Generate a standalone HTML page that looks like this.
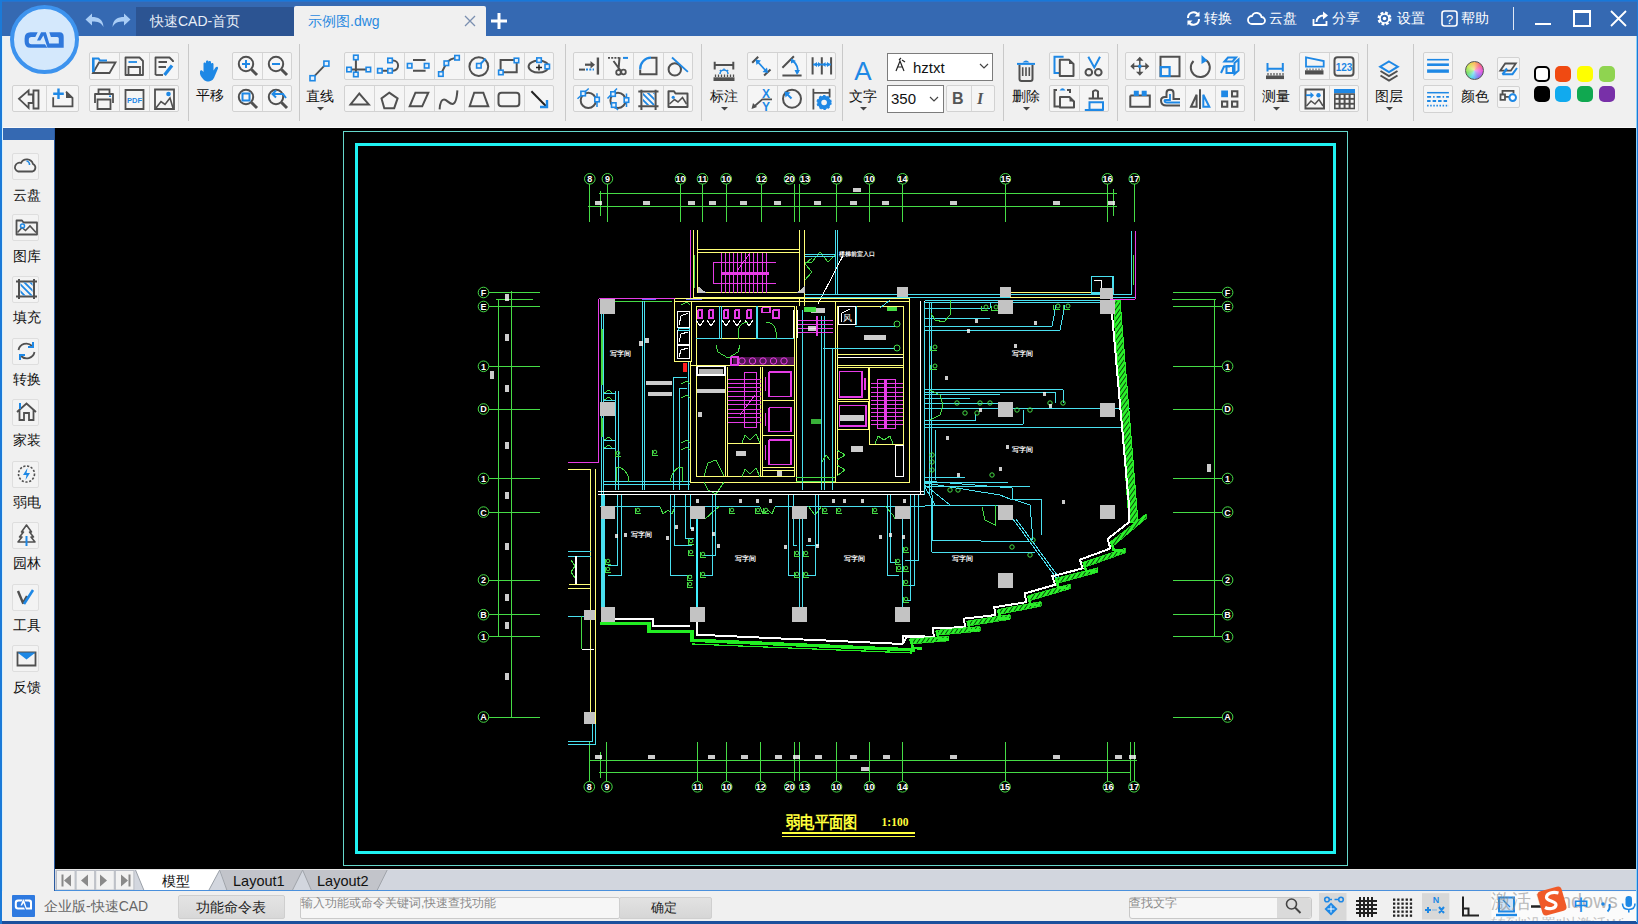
<!DOCTYPE html><html><head><meta charset="utf-8"><title>CAD</title><style>
html,body{margin:0;padding:0;width:1638px;height:924px;overflow:hidden;background:#f0f0f0;font-family:"Liberation Sans",sans-serif;}
.a{position:absolute;}
svg.a{overflow:visible}
.grp{position:absolute;border:1px solid #d2d2d2;background:#f5f5f5;box-sizing:border-box;border-radius:2px}
.sep{position:absolute;top:44px;width:1px;height:77px;background:#c9c9c9}
.lbl{position:absolute;font-size:14px;line-height:14px;color:#111;white-space:nowrap}
</style></head><body>
<div class="a" style="left:0px;top:0px;width:1638px;height:36px;background:#3569b2;"></div>
<div class="a" style="left:0px;top:0px;width:1638px;height:1px;background:#1878d8;"></div>
<div class="a" style="left:0px;top:1px;width:1638px;height:1px;background:#2872cc;"></div>
<div class="a" style="left:136px;top:7px;width:158px;height:29px;background:#2c5492;"></div>
<div class="a" style="left:150px;top:14px;font-size:14px;color:#e8eef8;line-height:1;white-space:nowrap;">快速CAD-首页</div>
<div class="a" style="left:294px;top:6px;width:192px;height:30px;background:#f0f0f0;border-radius:2px 2px 0 0;"></div>
<div class="a" style="left:308px;top:14px;font-size:14px;color:#2a8ae0;line-height:1;white-space:nowrap;">示例图.dwg</div>
<svg class="a" style="left:464px;top:15px;" width="12" height="12" viewBox="0 0 12 12"><path d="M1 1L11 11M11 1L1 11" stroke="#7a8fb0" stroke-width="1.3"/></svg>
<svg class="a" style="left:490px;top:12px;" width="18" height="18" viewBox="0 0 18 18"><path d="M9 1V17M1 9H17" stroke="#fff" stroke-width="3"/></svg>
<svg class="a" style="left:85px;top:13px;" width="19" height="15" viewBox="0 0 19 15"><path d="M0.5 6.5L7 0.5V4C13 4 18 6 18.5 14C16 9.5 13 8.5 7 8.5V12.5Z" fill="#a9cdf5"/></svg>
<svg class="a" style="left:112px;top:13px;" width="19" height="15" viewBox="0 0 19 15"><path d="M18.5 6.5L12 0.5V4C6 4 1 6 0.5 14C3 9.5 6 8.5 12 8.5V12.5Z" fill="#a9cdf5"/></svg>
<svg class="a" style="left:1185px;top:10px;" width="17" height="17" viewBox="0 0 17 17"><path d="M3 8A5.5 5.5 0 0 1 13.5 5.5M14 9A5.5 5.5 0 0 1 3.5 11.5" stroke="#fff" stroke-width="2" fill="none"/><path d="M14.5 1.5V6.5H9.5Z M2.5 15.5V10.5H7.5Z" fill="#fff"/></svg>
<div class="a" style="left:1204px;top:11px;font-size:14px;color:#fff;line-height:1;white-space:nowrap;">转换</div>
<svg class="a" style="left:1248px;top:10px;" width="17" height="17" viewBox="0 0 17 17"><path d="M4 14H13.5A3.5 3.5 0 0 0 13.5 7A5 5 0 0 0 4 6A4 4 0 0 0 4 14Z" stroke="#fff" stroke-width="1.8" fill="none"/></svg>
<div class="a" style="left:1269px;top:11px;font-size:14px;color:#fff;line-height:1;white-space:nowrap;">云盘</div>
<svg class="a" style="left:1312px;top:10px;" width="17" height="17" viewBox="0 0 17 17"><path d="M1.5 9V15H14.5V11" stroke="#fff" stroke-width="1.8" fill="none"/><path d="M4.5 12C5 7 8 5.5 12 5.5" stroke="#fff" stroke-width="1.8" fill="none"/><path d="M11 1.5L16 5.5L11 9.5Z" fill="#fff"/></svg>
<div class="a" style="left:1332px;top:11px;font-size:14px;color:#fff;line-height:1;white-space:nowrap;">分享</div>
<svg class="a" style="left:1376px;top:10px;" width="17" height="17" viewBox="0 0 17 17"><circle cx="8.5" cy="8.5" r="5.5" stroke="#fff" stroke-width="3" fill="none" stroke-dasharray="2.6 1.7"/><circle cx="8.5" cy="8.5" r="4.5" stroke="#fff" stroke-width="1.6" fill="none"/><circle cx="8.5" cy="8.5" r="1.8" fill="#fff"/></svg>
<div class="a" style="left:1397px;top:11px;font-size:14px;color:#fff;line-height:1;white-space:nowrap;">设置</div>
<svg class="a" style="left:1441px;top:10px;" width="17" height="17" viewBox="0 0 17 17"><rect x="1" y="1" width="15" height="15" rx="2.5" stroke="#fff" stroke-width="1.6" fill="none"/><text x="8.5" y="13.5" font-size="13" fill="#fff" text-anchor="middle" font-family="Liberation Sans">?</text></svg>
<div class="a" style="left:1461px;top:11px;font-size:14px;color:#fff;line-height:1;white-space:nowrap;">帮助</div>
<div class="a" style="left:1513px;top:7px;width:1px;height:23px;background:#e0e8f4;"></div>
<div class="a" style="left:1535px;top:23px;width:16px;height:2px;background:#fff;"></div>
<div class="a" style="left:1573px;top:10px;width:14px;height:12px;border:2px solid #fff;border-top-width:3px"></div>
<svg class="a" style="left:1610px;top:10px;" width="17" height="17" viewBox="0 0 17 17"><path d="M1 1L16 16M16 1L1 16" stroke="#fff" stroke-width="1.8"/></svg>
<div class="a" style="left:2px;top:36px;width:1634px;height:92px;background:#f0f0f0;"></div>
<div class="a" style="left:2px;top:127px;width:1634px;height:1px;background:#fafafa;"></div>
<div class="sep" style="left:188px"></div>
<div class="sep" style="left:299px"></div>
<div class="sep" style="left:565px"></div>
<div class="sep" style="left:701px"></div>
<div class="sep" style="left:842px"></div>
<div class="sep" style="left:1003px"></div>
<div class="sep" style="left:1117px"></div>
<div class="sep" style="left:1254px"></div>
<div class="sep" style="left:1367px"></div>
<div class="sep" style="left:1413px"></div>
<div class="grp" style="left:12px;top:85px;width:67px;height:27px"></div>
<div class="a" style="left:45.5px;top:86px;width:1px;height:25px;background:#d6d6d6"></div>
<div class="grp" style="left:89px;top:52px;width:90px;height:28px"></div>
<div class="a" style="left:119.0px;top:53px;width:1px;height:26px;background:#d6d6d6"></div>
<div class="a" style="left:149.0px;top:53px;width:1px;height:26px;background:#d6d6d6"></div>
<div class="grp" style="left:89px;top:85px;width:90px;height:27px"></div>
<div class="a" style="left:119.0px;top:86px;width:1px;height:25px;background:#d6d6d6"></div>
<div class="a" style="left:149.0px;top:86px;width:1px;height:25px;background:#d6d6d6"></div>
<div class="grp" style="left:232px;top:52px;width:60px;height:28px"></div>
<div class="a" style="left:262.0px;top:53px;width:1px;height:26px;background:#d6d6d6"></div>
<div class="grp" style="left:232px;top:85px;width:60px;height:27px"></div>
<div class="a" style="left:262.0px;top:86px;width:1px;height:25px;background:#d6d6d6"></div>
<div class="grp" style="left:344px;top:52px;width:210px;height:28px"></div>
<div class="a" style="left:374.0px;top:53px;width:1px;height:26px;background:#d6d6d6"></div>
<div class="a" style="left:404.0px;top:53px;width:1px;height:26px;background:#d6d6d6"></div>
<div class="a" style="left:434.0px;top:53px;width:1px;height:26px;background:#d6d6d6"></div>
<div class="a" style="left:464.0px;top:53px;width:1px;height:26px;background:#d6d6d6"></div>
<div class="a" style="left:494.0px;top:53px;width:1px;height:26px;background:#d6d6d6"></div>
<div class="a" style="left:524.0px;top:53px;width:1px;height:26px;background:#d6d6d6"></div>
<div class="grp" style="left:344px;top:85px;width:210px;height:27px"></div>
<div class="a" style="left:374.0px;top:86px;width:1px;height:25px;background:#d6d6d6"></div>
<div class="a" style="left:404.0px;top:86px;width:1px;height:25px;background:#d6d6d6"></div>
<div class="a" style="left:434.0px;top:86px;width:1px;height:25px;background:#d6d6d6"></div>
<div class="a" style="left:464.0px;top:86px;width:1px;height:25px;background:#d6d6d6"></div>
<div class="a" style="left:494.0px;top:86px;width:1px;height:25px;background:#d6d6d6"></div>
<div class="a" style="left:524.0px;top:86px;width:1px;height:25px;background:#d6d6d6"></div>
<div class="grp" style="left:573px;top:52px;width:120px;height:28px"></div>
<div class="a" style="left:603.0px;top:53px;width:1px;height:26px;background:#d6d6d6"></div>
<div class="a" style="left:633.0px;top:53px;width:1px;height:26px;background:#d6d6d6"></div>
<div class="a" style="left:663.0px;top:53px;width:1px;height:26px;background:#d6d6d6"></div>
<div class="grp" style="left:573px;top:85px;width:120px;height:27px"></div>
<div class="a" style="left:603.0px;top:86px;width:1px;height:25px;background:#d6d6d6"></div>
<div class="a" style="left:633.0px;top:86px;width:1px;height:25px;background:#d6d6d6"></div>
<div class="a" style="left:663.0px;top:86px;width:1px;height:25px;background:#d6d6d6"></div>
<div class="grp" style="left:747px;top:52px;width:89px;height:28px"></div>
<div class="a" style="left:776.7px;top:53px;width:1px;height:26px;background:#d6d6d6"></div>
<div class="a" style="left:806.3px;top:53px;width:1px;height:26px;background:#d6d6d6"></div>
<div class="grp" style="left:747px;top:85px;width:89px;height:27px"></div>
<div class="a" style="left:776.7px;top:86px;width:1px;height:25px;background:#d6d6d6"></div>
<div class="a" style="left:806.3px;top:86px;width:1px;height:25px;background:#d6d6d6"></div>
<div class="grp" style="left:946px;top:85px;width:49px;height:27px"></div>
<div class="a" style="left:970.5px;top:86px;width:1px;height:25px;background:#d6d6d6"></div>
<div class="grp" style="left:1049px;top:52px;width:60px;height:28px"></div>
<div class="a" style="left:1079.0px;top:53px;width:1px;height:26px;background:#d6d6d6"></div>
<div class="grp" style="left:1049px;top:85px;width:60px;height:27px"></div>
<div class="a" style="left:1079.0px;top:86px;width:1px;height:25px;background:#d6d6d6"></div>
<div class="grp" style="left:1125px;top:52px;width:120px;height:28px"></div>
<div class="a" style="left:1155.0px;top:53px;width:1px;height:26px;background:#d6d6d6"></div>
<div class="a" style="left:1185.0px;top:53px;width:1px;height:26px;background:#d6d6d6"></div>
<div class="a" style="left:1215.0px;top:53px;width:1px;height:26px;background:#d6d6d6"></div>
<div class="grp" style="left:1125px;top:85px;width:120px;height:27px"></div>
<div class="a" style="left:1155.0px;top:86px;width:1px;height:25px;background:#d6d6d6"></div>
<div class="a" style="left:1185.0px;top:86px;width:1px;height:25px;background:#d6d6d6"></div>
<div class="a" style="left:1215.0px;top:86px;width:1px;height:25px;background:#d6d6d6"></div>
<div class="grp" style="left:1299px;top:52px;width:60px;height:28px"></div>
<div class="a" style="left:1329.0px;top:53px;width:1px;height:26px;background:#d6d6d6"></div>
<div class="grp" style="left:1299px;top:85px;width:60px;height:27px"></div>
<div class="a" style="left:1329.0px;top:86px;width:1px;height:25px;background:#d6d6d6"></div>
<div class="grp" style="left:1423px;top:52px;width:30px;height:28px"></div>
<div class="grp" style="left:1423px;top:85px;width:30px;height:28px"></div>
<div class="grp" style="left:1497px;top:57px;width:23px;height:23px"></div>
<div class="grp" style="left:1497px;top:86px;width:23px;height:22px"></div>
<div class="a" style="left:887px;top:53px;width:106px;height:28px;border:1px solid #7c7c7c;background:#fff;box-sizing:border-box"></div>
<div class="a" style="left:913px;top:60px;font-size:15px;color:#111;line-height:1;white-space:nowrap;">hztxt</div>
<svg class="a" style="left:893px;top:58px;" width="14" height="14" viewBox="0 0 14 14"><path d="M3 13L7 3L11 13M4.5 9H9.5M6 2L8 0M9 2L12 4" stroke="#222" stroke-width="1.2" fill="none"/></svg>
<svg class="a" style="left:979px;top:63px;" width="10" height="6" viewBox="0 0 10 6"><path d="M1 1L5 5L9 1" stroke="#444" stroke-width="1.2" fill="none"/></svg>
<div class="a" style="left:887px;top:85px;width:57px;height:28px;border:1px solid #7c7c7c;background:#fff;box-sizing:border-box"></div>
<div class="a" style="left:891px;top:91px;font-size:15px;color:#111;line-height:1;white-space:nowrap;">350</div>
<svg class="a" style="left:929px;top:96px;" width="10" height="6" viewBox="0 0 10 6"><path d="M1 1L5 5L9 1" stroke="#444" stroke-width="1.2" fill="none"/></svg>
<div class="a" style="left:952px;top:91px;font-size:16px;color:#555;line-height:1;white-space:nowrap;font-weight:bold;">B</div>
<div class="a" style="left:977px;top:91px;font-size:16px;color:#555;line-height:1;white-space:nowrap;font-style:italic;font-family:&quot;Liberation Serif&quot;,serif;font-weight:bold;">I</div>
<div class="lbl" style="left:170px;top:88px;width:80px;text-align:center">平移</div>
<div class="lbl" style="left:280px;top:89px;width:80px;text-align:center">直线</div>
<svg class="a" style="left:316.5px;top:106.5px;" width="7" height="4" viewBox="0 0 7 4"><path d="M0 0H7L3.5 3.5Z" fill="#444"/></svg>
<div class="lbl" style="left:684px;top:89px;width:80px;text-align:center">标注</div>
<svg class="a" style="left:720.5px;top:106.5px;" width="7" height="4" viewBox="0 0 7 4"><path d="M0 0H7L3.5 3.5Z" fill="#444"/></svg>
<div class="lbl" style="left:823px;top:89px;width:80px;text-align:center">文字</div>
<svg class="a" style="left:859.5px;top:106.5px;" width="7" height="4" viewBox="0 0 7 4"><path d="M0 0H7L3.5 3.5Z" fill="#444"/></svg>
<div class="lbl" style="left:986px;top:89px;width:80px;text-align:center">删除</div>
<svg class="a" style="left:1022.5px;top:106.5px;" width="7" height="4" viewBox="0 0 7 4"><path d="M0 0H7L3.5 3.5Z" fill="#444"/></svg>
<div class="lbl" style="left:1236px;top:89px;width:80px;text-align:center">测量</div>
<svg class="a" style="left:1272.5px;top:106.5px;" width="7" height="4" viewBox="0 0 7 4"><path d="M0 0H7L3.5 3.5Z" fill="#444"/></svg>
<div class="lbl" style="left:1349px;top:89px;width:80px;text-align:center">图层</div>
<svg class="a" style="left:1385.5px;top:106.5px;" width="7" height="4" viewBox="0 0 7 4"><path d="M0 0H7L3.5 3.5Z" fill="#444"/></svg>
<div class="lbl" style="left:1435px;top:89px;width:80px;text-align:center">颜色</div>
<div class="a" style="left:10px;top:5px;width:61px;height:61px;border-radius:50%;background:#d4e8fc;border:4px solid #3d93ee;"></div>
<svg class="a" style="left:0px;top:0px;" width="80" height="80" viewBox="0 0 80 80"><path d="M37.7 32.3H30.5Q24.6 32.3 24.6 38.5V41.5Q24.6 47.8 30.5 47.8H47.3L45 44.2H31.5Q28.8 44.2 28.8 41.5V39.5Q28.8 36.9 31.5 36.9H35.3Z M37 40.5H40.3L43.4 35.5L47.5 47.8H63.7V36.9Q63.7 32.3 59.7 32.3H49.3L50.9 36.9H57.3Q58.8 36.9 58.8 38.4V43.6H49.3L45.9 32.3H41.1Z" fill="#2f78dc"/></svg>
<svg class="a" style="left:0;top:36px" width="1638" height="92" viewBox="0 36 1638 92"><path d="M19 98.8L28.6 90.4V94.5H33.1V103H28.6V107.8Z" stroke="#505050" stroke-width="1.8" fill="none" stroke-linejoin="miter"/><path d="M33.5 90.5H38.5V108.5H33.5Z" stroke="#505050" stroke-width="1.8" fill="none"/><path d="M53.2 97.2V106.3H72.5V98L66 91.6" stroke="#505050" stroke-width="1.8" fill="none"/><path d="M66 91.6L72.5 98H66Z" fill="#505050"/><path d="M58.5 88.5V99M53.2 93.8H63.8" stroke="#1e88e5" stroke-width="2.4" fill="none"/><path d="M93 73L99 62.5H115.5L109.5 73Z" stroke="#505050" stroke-width="1.8" fill="none"/><path d="M93 72V58.5H98.5L100 60.5H107" stroke="#1e88e5" stroke-width="2" fill="none"/><path d="M93.5 59V72" stroke="#1e88e5" stroke-width="2.2" fill="none"/><path d="M125.5 57.5H139.5L143 61V75H125.5Z" stroke="#505050" stroke-width="1.8" fill="none" stroke-linejoin="round"/><path d="M128.5 62H137" stroke="#1e88e5" stroke-width="1.8" fill="none"/><path d="M128.5 75V67H140V75" stroke="#505050" stroke-width="1.8" fill="none"/><path d="M155.5 75V57.5H169.5L173 61V62" stroke="#505050" stroke-width="1.8" fill="none" stroke-linejoin="round"/><path d="M158.5 62H167M158.5 67H166" stroke="#505050" stroke-width="1.8" fill="none"/><path d="M155.5 75H163" stroke="#505050" stroke-width="1.8" fill="none"/><path d="M164.5 75L172 65.5" stroke="#1e88e5" stroke-width="3.2" fill="none"/><path d="M98.5 93.5V89.5H109.5V93.5" stroke="#505050" stroke-width="1.8" fill="none"/><path d="M95 103V94H113V103" stroke="#505050" stroke-width="1.8" fill="none" stroke-linejoin="round"/><path d="M97.5 99.5H110.5V109H97.5Z" stroke="#505050" stroke-width="1.8" fill="none"/><path d="M109 95.5H111V97H109Z" fill="#1e88e5"/><path d="M125.5 90H143.5V109H125.5Z" stroke="#505050" stroke-width="1.8" fill="none"/><text x="134.5" y="103" font-size="7.5" font-weight="bold" fill="#1e88e5" text-anchor="middle" font-family="Liberation Sans">PDF</text><path d="M155 89.5H174V109H155Z" stroke="#505050" stroke-width="1.8" fill="none"/><path d="M156 108L161 101.5L165 104.5L170 98L173 108" stroke="#505050" stroke-width="1.6" fill="none"/><circle cx="168.5" cy="94" r="2.3" stroke="#1e88e5" stroke-width="0" fill="#1e88e5"/><path d="M203.5 79.5C201 77 199.5 74.5 200 71.5C200.5 69.5 202 70 203.5 72V63.5C203.5 62 206 62 206 63.5V70V61.5C206 60 208.5 60 208.5 61.5V70V62C208.5 60.5 211 60.5 211 62V70.5V64C211 62.5 213.5 62.5 213.5 64V70.5L215.5 67.5C216.5 66 218.5 66.5 218 68.5L215 75.5C214 79 212 81 209 81.5C207 81.7 205 81 203.5 79.5Z" fill="#1e88e5"/><circle cx="246" cy="64" r="7.2" stroke="#505050" stroke-width="2" fill="none"/><path d="M251.5 69.5L257 75" stroke="#505050" stroke-width="3" fill="none"/><path d="M242 64H250M246 60V68" stroke="#1e88e5" stroke-width="2" fill="none"/><circle cx="276" cy="64" r="7.2" stroke="#505050" stroke-width="2" fill="none"/><path d="M281.5 69.5L287 75" stroke="#505050" stroke-width="3" fill="none"/><path d="M272 64H280" stroke="#1e88e5" stroke-width="2" fill="none"/><circle cx="246" cy="97" r="7.2" stroke="#505050" stroke-width="2" fill="none"/><path d="M251.5 102.5L257 108" stroke="#505050" stroke-width="3" fill="none"/><path d="M242.5 93.5H249.5V100.5H242.5Z" stroke="#1e88e5" stroke-width="2" fill="none"/><circle cx="276" cy="97" r="7.2" stroke="#505050" stroke-width="2" fill="none"/><path d="M281.5 102.5L287 108" stroke="#505050" stroke-width="3" fill="none"/><path d="M286 98L283 94H273M276 90.5L272.5 94L276 97.5" stroke="#1e88e5" stroke-width="2" fill="none"/><path d="M312.5 78.2L326.4 63.6" stroke="#505050" stroke-width="1.8" fill="none"/><rect x="310.0" y="75.7" width="5" height="5" stroke="#1e88e5" stroke-width="1.6" fill="#e8f2fc"/><rect x="323.9" y="61.1" width="5" height="5" stroke="#1e88e5" stroke-width="1.6" fill="#e8f2fc"/><path d="M355.9 57V74.5M349 69.6H368.4" stroke="#505050" stroke-width="2" fill="none"/><rect x="353.6" y="55.2" width="4.5" height="4.5" stroke="#1e88e5" stroke-width="1.6" fill="#e8f2fc"/><rect x="346.8" y="67.3" width="4.5" height="4.5" stroke="#1e88e5" stroke-width="1.6" fill="#e8f2fc"/><rect x="366.1" y="67.3" width="4.5" height="4.5" stroke="#1e88e5" stroke-width="1.6" fill="#e8f2fc"/><rect x="353.6" y="72.2" width="4.5" height="4.5" stroke="#1e88e5" stroke-width="1.6" fill="#e8f2fc"/><path d="M379.8 70.7H390M390 60.5H393A5.1 5.1 0 0 1 393 70.7H390" stroke="#505050" stroke-width="2" fill="none"/><rect x="377.6" y="68.5" width="4.5" height="4.5" stroke="#1e88e5" stroke-width="1.6" fill="#e8f2fc"/><rect x="387.8" y="68.5" width="4.5" height="4.5" stroke="#1e88e5" stroke-width="1.6" fill="#e8f2fc"/><rect x="387.8" y="58.2" width="4.5" height="4.5" stroke="#1e88e5" stroke-width="1.6" fill="#e8f2fc"/><path d="M413 60.1H425.6M413 70.7H425.6" stroke="#505050" stroke-width="2" fill="none"/><rect x="407.4" y="63.5" width="4.5" height="4.5" stroke="#1e88e5" stroke-width="1.6" fill="#e8f2fc"/><rect x="424.4" y="63.5" width="4.5" height="4.5" stroke="#1e88e5" stroke-width="1.6" fill="#e8f2fc"/><path d="M440.8 74.1L446.4 63.2Q450 58.5 457 57.8" stroke="#505050" stroke-width="2" fill="none"/><rect x="438.6" y="71.8" width="4.5" height="4.5" stroke="#1e88e5" stroke-width="1.6" fill="#e8f2fc"/><rect x="444.1" y="61.0" width="4.5" height="4.5" stroke="#1e88e5" stroke-width="1.6" fill="#e8f2fc"/><rect x="454.8" y="55.5" width="4.5" height="4.5" stroke="#1e88e5" stroke-width="1.6" fill="#e8f2fc"/><circle cx="478.8" cy="66.6" r="9.4" stroke="#505050" stroke-width="2" fill="none"/><path d="M478.8 65.8L485.6 58.6" stroke="#1e88e5" stroke-width="2" fill="none"/><rect x="476.6" y="63.5" width="4.5" height="4.5" stroke="#1e88e5" stroke-width="1.6" fill="#e8f2fc"/><path d="M500.6 60.1H516.7V72.2H500.6Z" stroke="#505050" stroke-width="2" fill="none"/><rect x="498.6" y="70.2" width="4.5" height="4.5" stroke="#1e88e5" stroke-width="1.6" fill="#e8f2fc"/><rect x="514.2" y="58.2" width="4.5" height="4.5" stroke="#1e88e5" stroke-width="1.6" fill="#e8f2fc"/><ellipse cx="538.6" cy="66.6" rx="10" ry="6" stroke="#505050" stroke-width="2" fill="none"/><path d="M536 67.5H542M539 64.5V70.5" stroke="#222" stroke-width="1.5" fill="none"/><rect x="536.8" y="57.9" width="4.5" height="4.5" stroke="#1e88e5" stroke-width="1.6" fill="#e8f2fc"/><rect x="545.0" y="64.3" width="4.5" height="4.5" stroke="#1e88e5" stroke-width="1.6" fill="#e8f2fc"/><path d="M350.6 104.4L359.3 93.5L368.8 104.4Z" stroke="#505050" stroke-width="2" fill="none"/><path d="M389.2 92.7L397.6 98.4L394.2 108.2H384.3L381.5 98.4Z" stroke="#505050" stroke-width="2" fill="none"/><path d="M415.4 92.7H428.3L422.2 106.3H409.7Z" stroke="#505050" stroke-width="2" fill="none"/><path d="M439.6 109.4C440 103 441.5 99.5 444 99.5C447 99.5 449 104 452.5 104C456 104 457 96 457.4 90.4" stroke="#505050" stroke-width="2" fill="none"/><path d="M474.2 92.7H483.3L488.3 106.3H469.7Z" stroke="#505050" stroke-width="2" fill="none"/><rect x="498.5" y="92.7" width="20.8" height="13.6" rx="3" stroke="#505050" stroke-width="2" fill="none"/><path d="M531.4 91.2L546.6 106.7" stroke="#222" stroke-width="2" fill="none"/><path d="M540 107H547V100" stroke="#1e88e5" stroke-width="2.4" fill="none"/><path d="M597.9 57.5V74.6" stroke="#505050" stroke-width="2.4" fill="none"/><path d="M585 64.7H592.5" stroke="#505050" stroke-width="2.2" fill="none"/><path d="M595 64.7L590.5 61V68.4Z" fill="#505050"/><path d="M579 69.6H585" stroke="#505050" stroke-width="2" fill="none"/><path d="M586 69.6H594" stroke="#1e88e5" stroke-width="2" fill="none" stroke-dasharray="2 1.3"/><path d="M608 57.9H621" stroke="#505050" stroke-width="1.6" fill="none" stroke-dasharray="2 1.2"/><path d="M623 57.9H628" stroke="#1e88e5" stroke-width="2" fill="none"/><path d="M613.5 61L620.5 70.5M619.5 57.5L618.5 70" stroke="#505050" stroke-width="2" fill="none"/><circle cx="618.5" cy="72.5" r="2.3" stroke="#505050" stroke-width="1.8" fill="none"/><circle cx="623.5" cy="72" r="2.3" stroke="#505050" stroke-width="1.8" fill="none"/><path d="M651 57.7H656.5V74.2H640.2V69.4" stroke="#505050" stroke-width="2" fill="none"/><path d="M640.2 69.4A11 11 0 0 1 651 57.7" stroke="#1e88e5" stroke-width="2.2" fill="none"/><circle cx="674.8" cy="69.4" r="6.2" stroke="#505050" stroke-width="2" fill="none"/><path d="M672 57.5L687.9 71.8" stroke="#1e88e5" stroke-width="1.8" fill="none"/><circle cx="588.3" cy="100.4" r="7.6" stroke="#505050" stroke-width="2" fill="none"/><path d="M577.5 98.8L588.7 88.5M597 93.2V107.1" stroke="#1e88e5" stroke-width="1.5" fill="none"/><rect x="580.9" y="91.3" width="4.5" height="4.5" stroke="#1e88e5" stroke-width="1.6" fill="#e8f2fc"/><rect x="594.8" y="97.3" width="4.5" height="4.5" stroke="#1e88e5" stroke-width="1.6" fill="#e8f2fc"/><circle cx="618" cy="100.4" r="7.6" stroke="#505050" stroke-width="2" fill="none"/><path d="M607.5 98.5L617 88.5M626.5 93.5V107M612 104L618 110" stroke="#1e88e5" stroke-width="1.5" fill="none"/><rect x="610.8" y="91.8" width="4.5" height="4.5" stroke="#1e88e5" stroke-width="1.6" fill="#e8f2fc"/><rect x="624.2" y="97.8" width="4.5" height="4.5" stroke="#1e88e5" stroke-width="1.6" fill="#e8f2fc"/><rect x="611.5" y="102.8" width="4.5" height="4.5" stroke="#1e88e5" stroke-width="1.6" fill="#e8f2fc"/><path d="M638.3 91.5H658.5M638.3 106.3H658.5M641.4 89.7V109.9M655.6 89.7V109.9" stroke="#505050" stroke-width="2" fill="none"/><clipPath id="hc"><rect x="643" y="93" width="11.5" height="12"/></clipPath><path d="M636 99L644 107M636 93L650 107M638 89L656 107M642 87L660 105M647 86L662 101M652 86L662 96" stroke="#1e88e5" stroke-width="1.8" fill="none" clip-path="url(#hc)"/><path d="M668.5 107V91.3H674L675.5 93.5H687.5V107Z" stroke="#505050" stroke-width="2" fill="none" stroke-linejoin="round"/><path d="M669.5 104L674.5 99.5L678 102L682.5 97.5L686.5 104" stroke="#505050" stroke-width="1.6" fill="none"/><circle cx="673.2" cy="97.3" r="1.6" stroke="#1e88e5" stroke-width="0" fill="#1e88e5"/><path d="M713.7 64.9H734.3M714.7 61.7V69.5M733.3 61.7V69.5" stroke="#505050" stroke-width="2" fill="none"/><path d="M713.5 77.3H734.5V81H713.5Z" fill="#505050"/><path d="M715.5 77V74.5M718.5 77V74.5M721.5 77V74.5M724.5 77V74.5M727.5 77V74.5M730.5 77V74.5M733.5 77V74.5" stroke="#505050" stroke-width="1.3" fill="none"/><path d="M720 74A4 4 0 0 1 728 74M724 68.5V70.5M720 70L721 71.5M728 70L727 71.5" stroke="#1e88e5" stroke-width="1.5" fill="none"/><path d="M752.2 62.7L758.2 56.7M764.1 75.5L770.5 69.5" stroke="#505050" stroke-width="2" fill="none"/><path d="M757 61L766.5 71.5" stroke="#1e88e5" stroke-width="1.8" fill="none"/><path d="M755.5 59.5L761 60.5L756.5 65Z M768 73L762.5 72L767 67.5Z" fill="#1e88e5"/><path d="M782.4 67.7L793.9 56.2M782.4 75.5H801.6" stroke="#505050" stroke-width="2" fill="none"/><path d="M792.5 60.5Q799 66 797.5 73" stroke="#1e88e5" stroke-width="1.8" fill="none"/><path d="M791 58.5L796 61L791 63.5Z M797 75L794.5 70H800Z" fill="#1e88e5"/><path d="M812.6 57.2V74.6M821.8 57.2V74.6M831.1 57.2V74.6" stroke="#505050" stroke-width="2" fill="none"/><path d="M813 64.5H831" stroke="#1e88e5" stroke-width="1.8" fill="none"/><path d="M813.5 64.5L817 62V67Z M821.3 64.5L818 62V67Z M822.3 64.5L825.5 62V67Z M830.5 64.5L827 62V67Z" fill="#1e88e5"/><text x="766" y="98" font-size="12" font-weight="bold" fill="#1e88e5" text-anchor="middle" font-family="Liberation Sans">X</text><text x="766" y="110.5" font-size="12" font-weight="bold" fill="#1e88e5" text-anchor="middle" font-family="Liberation Sans">Y</text><path d="M753 107.5L762.3 99.3H772" stroke="#505050" stroke-width="1.8" fill="none"/><path d="M751.5 109L753 103L757 107Z" fill="#505050"/><circle cx="792" cy="98.8" r="9" stroke="#505050" stroke-width="2" fill="none"/><path d="M791.5 98.5L786 93" stroke="#1e88e5" stroke-width="2" fill="none"/><path d="M784.5 91.5L790.5 92.5L785.5 97.5Z" fill="#1e88e5"/><path d="M813.4 88.8V109.4M829.6 88.8V97.5M814 92.9H829" stroke="#505050" stroke-width="1.8" fill="none"/><circle cx="824.1" cy="102.5" r="4.3" stroke="#1e88e5" stroke-width="3" fill="none"/><circle cx="824.1" cy="102.5" r="6" stroke="#1e88e5" stroke-width="1.6" fill="none"/><circle cx="824.1" cy="102.5" r="6.3" stroke="#1e88e5" stroke-width="2.6" fill="none" stroke-dasharray="2.2 1.8"/><text x="863" y="79.7" font-size="26" fill="#1e88e5" text-anchor="middle" font-family="Liberation Sans">A</text><path d="M1022.5 62.5Q1026 58.5 1029.5 62.5Z" fill="#1e88e5"/><path d="M1017 63.9H1035" stroke="#1e88e5" stroke-width="2" fill="none"/><path d="M1019.5 65V79Q1019.5 81 1021.5 81H1030.5Q1032.5 81 1032.5 79V65" stroke="#505050" stroke-width="2" fill="none"/><path d="M1022.7 67.3V76M1026 67.3V76M1029.3 67.3V76" stroke="#505050" stroke-width="1.6" fill="none"/><path d="M1063.6 56.7H1054.5V73H1059.8" stroke="#1e88e5" stroke-width="2" fill="none"/><path d="M1059.8 59.7H1069L1073.5 64V76H1059.8Z" stroke="#505050" stroke-width="2" fill="none" stroke-linejoin="round"/><path d="M1069 59.7L1073.5 64H1069Z" fill="#505050"/><path d="M1088.3 56.7L1094.3 67.5L1100 56.7" stroke="#1e88e5" stroke-width="2" fill="none"/><circle cx="1088.8" cy="72.3" r="3.3" stroke="#505050" stroke-width="2" fill="none"/><circle cx="1098.3" cy="72.3" r="3.3" stroke="#505050" stroke-width="2" fill="none"/><path d="M1057 90H1054.5V106.5H1059M1067 90H1070V93" stroke="#505050" stroke-width="2" fill="none"/><path d="M1059.5 90.5Q1062.5 86 1065.5 90.5Z" fill="#1e88e5"/><path d="M1060 107.5V97H1069.5L1074 101.5V107.5Z" stroke="#505050" stroke-width="2" fill="none" stroke-linejoin="round"/><path d="M1069.5 97L1074 101.5H1069.5Z" fill="#505050"/><path d="M1093 98V91.5Q1095.5 89 1098 91.5V98M1088.6 98.4H1103" stroke="#505050" stroke-width="2" fill="none"/><path d="M1089.5 102.2H1103V109.7H1089.5Z" stroke="#1e88e5" stroke-width="2" fill="none"/><path d="M1084.8 110H1103" stroke="#1e88e5" stroke-width="2" fill="none"/><path d="M1139.8 56.8L1143.5 60.8H1136Z M1139.8 75.8L1143.5 71.8H1136Z M1130.3 66.3L1134.3 62.6V70Z M1149.3 66.3L1145.3 62.6V70Z" fill="#505050"/><path d="M1139.8 60V72.5M1133.5 66.3H1146" stroke="#505050" stroke-width="1.5" fill="none"/><path d="M1138.3 64.8H1141.3V67.8H1138.3Z" fill="#1e88e5"/><path d="M1160.5 56.7H1179.5V76.2H1160.5Z" stroke="#505050" stroke-width="2" fill="none"/><path d="M1160.8 67.2H1169.6V76H1160.8Z" stroke="#1e88e5" stroke-width="2.2" fill="none"/><path d="M1206 60A9.5 9.5 0 1 1 1193.5 61" stroke="#505050" stroke-width="2" fill="none"/><path d="M1201.5 55L1207.5 60.5L1201.5 64Z" fill="#1e88e5"/><path d="M1221 73L1224 66.5H1230M1224.5 61.5L1228 57.5H1236L1232.5 61.5ZM1226.5 66H1233V73H1226.5ZM1234.5 63L1238.5 59.5V70.5L1234.5 74Z" stroke="#1e88e5" stroke-width="2" fill="none"/><path d="M1130.3 95.5V106.7H1149.8V95.5H1130.3" stroke="#505050" stroke-width="2" fill="none"/><path d="M1133.8 90.7H1138.8V96H1133.8Z M1141.7 90.7H1146.7V96H1141.7Z" fill="#1e88e5"/><path d="M1180 105.5H1166.5Q1161 105.5 1161 100.5Q1161 97 1165 97H1166.5V93Q1166.5 89.8 1170 89.8Q1173.5 89.8 1173.5 93V99H1180" stroke="#505050" stroke-width="2" fill="none"/><path d="M1180 102.5H1167Q1164.5 102.5 1164.5 100.5Q1164.5 100 1166 100H1170V94" stroke="#1e88e5" stroke-width="1.8" fill="none"/><path d="M1200 89.3V109.1" stroke="#505050" stroke-width="2" fill="none"/><path d="M1191 106.7L1196.6 94.8V106.7Z" stroke="#505050" stroke-width="2" fill="none"/><path d="M1203.3 94.8V106.7H1209.3Z" stroke="#1e88e5" stroke-width="2" fill="none"/><path d="M1221.2 90.5H1228V97.2H1221.2Z" fill="#1e88e5"/><path d="M1232 91.2H1237.4V96.5H1232ZM1222 101.5H1227.3V106.8H1222ZM1232 101.5H1237.4V106.8H1232Z" stroke="#505050" stroke-width="2" fill="none"/><path d="M1266.6 68.8H1283.7M1267.5 63V71.4M1282.8 63V71.4" stroke="#1e88e5" stroke-width="2" fill="none"/><path d="M1266 75.5H1284V79.1H1266Z" fill="#505050"/><path d="M1268 75.5V73M1271 75.5V73M1274 75.5V73M1277 75.5V73M1280 75.5V73M1283 75.5V73" stroke="#505050" stroke-width="1.2" fill="none"/><path d="M1306 57.3L1323.7 61V66.7H1306Z" stroke="#1e88e5" stroke-width="1.8" fill="none"/><path d="M1305 70.3H1323.5V74.5H1305Z" fill="#505050"/><path d="M1307 70.3V68.5M1310 70.3V68.5M1313 70.3V68.5M1316 70.3V68.5M1319 70.3V68.5M1322 70.3V68.5" stroke="#505050" stroke-width="1" fill="none"/><rect x="1334.5" y="57.3" width="19" height="18.5" rx="3" stroke="#505050" stroke-width="2" fill="none"/><text x="1344" y="70.5" font-size="10" font-weight="bold" fill="#1e88e5" text-anchor="middle" font-family="Liberation Sans">123</text><path d="M1305.5 89.5H1324V108.5H1305.5Z" stroke="#505050" stroke-width="2" fill="none"/><path d="M1306 95.2H1312.5" stroke="#1e88e5" stroke-width="1.8" fill="none"/><path d="M1314 95.2L1310.5 92V98.4Z" fill="#1e88e5"/><circle cx="1318.5" cy="95.2" r="2.2" stroke="#1e88e5" stroke-width="0" fill="#1e88e5"/><path d="M1306.5 106L1311 101L1315 104L1319 99.5L1323 106" stroke="#505050" stroke-width="1.5" fill="none"/><path d="M1334 89H1355V93.3H1334Z" fill="#1e88e5"/><path d="M1334 93.3H1355V109.3H1334Z" fill="#505050"/><rect x="1335.6" y="94.9" width="3" height="3" fill="#f4f4f4"/><rect x="1340.6" y="94.9" width="3" height="3" fill="#f4f4f4"/><rect x="1345.6" y="94.9" width="3" height="3" fill="#f4f4f4"/><rect x="1350.6" y="94.9" width="3" height="3" fill="#f4f4f4"/><rect x="1335.6" y="99.8" width="3" height="3" fill="#f4f4f4"/><rect x="1340.6" y="99.8" width="3" height="3" fill="#f4f4f4"/><rect x="1345.6" y="99.8" width="3" height="3" fill="#f4f4f4"/><rect x="1350.6" y="99.8" width="3" height="3" fill="#f4f4f4"/><rect x="1335.6" y="104.7" width="3" height="3" fill="#f4f4f4"/><rect x="1340.6" y="104.7" width="3" height="3" fill="#f4f4f4"/><rect x="1345.6" y="104.7" width="3" height="3" fill="#f4f4f4"/><rect x="1350.6" y="104.7" width="3" height="3" fill="#f4f4f4"/><path d="M1389 61.5L1397.8 66.7L1389 72L1380.2 66.7Z" stroke="#1e88e5" stroke-width="2" fill="none"/><path d="M1380.5 71L1389 76L1397.5 71M1380.5 75.5L1389 80.5L1397.5 75.5" stroke="#505050" stroke-width="2" fill="none"/><path d="M1427.1 59.7H1448.9" stroke="#1e88e5" stroke-width="1.6" fill="none"/><path d="M1427.1 64.7H1448.9" stroke="#1e88e5" stroke-width="2.6" fill="none"/><path d="M1427.1 71.1H1448.9" stroke="#1e88e5" stroke-width="3.4" fill="none"/><path d="M1427.1 92.7H1448.9" stroke="#1e88e5" stroke-width="1.5" fill="none"/><path d="M1427.1 96.9H1448.9" stroke="#1e88e5" stroke-width="1.8" fill="none" stroke-dasharray="4 2 1.5 2"/><path d="M1427.1 101H1448.9" stroke="#1e88e5" stroke-width="1.8" fill="none" stroke-dasharray="3.5 2"/><path d="M1427.1 105.6H1448.9" stroke="#1e88e5" stroke-width="1.6" fill="none" stroke-dasharray="1.5 1.6"/><path d="M1500.2 70.7L1505.2 63.5H1515.8L1510.8 70.7Z" stroke="#505050" stroke-width="1.8" fill="none"/><path d="M1502.5 74.5L1507 68.5" stroke="#1e88e5" stroke-width="2.2" fill="none"/><path d="M1502.5 74.2H1512.5L1517 68" stroke="#1e88e5" stroke-width="2" fill="none"/><path d="M1500.5 94.5V99.8H1505V94.5Z" stroke="#505050" stroke-width="1.8" fill="none"/><path d="M1505 96.8H1509.5M1502.5 94.5V90.8H1513.5V93.5" stroke="#505050" stroke-width="1.8" fill="none"/><circle cx="1512.7" cy="97.6" r="3.3" stroke="#1e88e5" stroke-width="2" fill="#fff"/></svg>
<div class="a" style="left:1464.8px;top:60.7px;width:17px;height:17px;border:1.6px solid #555;border-radius:50%;background:radial-gradient(circle at 50% 50%, rgba(255,255,255,0.55), rgba(255,255,255,0) 70%), conic-gradient(from 200deg, #50d8f0, #70e060, #c8e850, #f8c050, #f86080, #e050e0, #8070f0, #50d8f0);"></div>
<div class="a" style="left:1534px;top:66px;width:16px;height:16px;border-radius:5px;background:#ffffff;box-sizing:border-box;border:2px solid #000;"></div>
<div class="a" style="left:1555px;top:66px;width:16px;height:16px;border-radius:5px;background:#f04a12;box-sizing:border-box;"></div>
<div class="a" style="left:1577px;top:66px;width:16px;height:16px;border-radius:5px;background:#ffff00;box-sizing:border-box;"></div>
<div class="a" style="left:1599px;top:66px;width:16px;height:16px;border-radius:5px;background:#8fd450;box-sizing:border-box;"></div>
<div class="a" style="left:1534px;top:86px;width:16px;height:16px;border-radius:5px;background:#000000;box-sizing:border-box;"></div>
<div class="a" style="left:1555px;top:86px;width:16px;height:16px;border-radius:5px;background:#11aaee;box-sizing:border-box;"></div>
<div class="a" style="left:1577px;top:86px;width:16px;height:16px;border-radius:5px;background:#10a850;box-sizing:border-box;"></div>
<div class="a" style="left:1599px;top:86px;width:16px;height:16px;border-radius:5px;background:#7830a8;box-sizing:border-box;"></div>
<div class="a" style="left:2px;top:128px;width:53px;height:763px;background:#f0f0f0;"></div>
<div class="a" style="left:2px;top:128px;width:53px;height:12px;background:#3569b2;"></div>
<div class="a" style="left:12px;top:153px;width:27px;height:27px;border:1px solid #dedede;background:#f3f3f3;box-sizing:border-box;border-radius:2px"></div>
<div class="lbl" style="left:13px;top:187.5px;">云盘</div>
<div class="a" style="left:12px;top:214px;width:27px;height:27px;border:1px solid #dedede;background:#f3f3f3;box-sizing:border-box;border-radius:2px"></div>
<div class="lbl" style="left:13px;top:248.5px;">图库</div>
<div class="a" style="left:12px;top:275.5px;width:27px;height:27px;border:1px solid #dedede;background:#f3f3f3;box-sizing:border-box;border-radius:2px"></div>
<div class="lbl" style="left:13px;top:310.0px;">填充</div>
<div class="a" style="left:12px;top:337.5px;width:27px;height:27px;border:1px solid #dedede;background:#f3f3f3;box-sizing:border-box;border-radius:2px"></div>
<div class="lbl" style="left:13px;top:372.0px;">转换</div>
<div class="a" style="left:12px;top:398.5px;width:27px;height:27px;border:1px solid #dedede;background:#f3f3f3;box-sizing:border-box;border-radius:2px"></div>
<div class="lbl" style="left:13px;top:433.0px;">家装</div>
<div class="a" style="left:12px;top:460.5px;width:27px;height:27px;border:1px solid #dedede;background:#f3f3f3;box-sizing:border-box;border-radius:2px"></div>
<div class="lbl" style="left:13px;top:495.0px;">弱电</div>
<div class="a" style="left:12px;top:521.5px;width:27px;height:27px;border:1px solid #dedede;background:#f3f3f3;box-sizing:border-box;border-radius:2px"></div>
<div class="lbl" style="left:13px;top:556.0px;">园林</div>
<div class="a" style="left:12px;top:583.5px;width:27px;height:27px;border:1px solid #dedede;background:#f3f3f3;box-sizing:border-box;border-radius:2px"></div>
<div class="lbl" style="left:13px;top:618.0px;">工具</div>
<div class="a" style="left:12px;top:645px;width:27px;height:27px;border:1px solid #dedede;background:#f3f3f3;box-sizing:border-box;border-radius:2px"></div>
<div class="lbl" style="left:13px;top:679.5px;">反馈</div>
<svg class="a" style="left:0;top:0" width="60" height="700" viewBox="0 0 60 700"><path d="M18 171.5H32.5A4 4 0 0 0 33 164.0A6.5 6.5 0 0 0 21 163.0A4.5 4.5 0 0 0 18 171.5Z" stroke="#505050" stroke-width="1.8" fill="none"/><path d="M26.5 161.0A3.5 3.5 0 0 1 29.5 165.0" stroke="#1e88e5" stroke-width="1.6" fill="none"/><path d="M16.5 234.5V220.5H22L23.5 222.5H37V234.5Z" stroke="#505050" stroke-width="1.8" fill="none" stroke-linejoin="round"/><path d="M17.5 232.5L22 227.5L25.5 230.5L30 226.0L36 232.5" stroke="#505050" stroke-width="1.6" fill="none"/><circle cx="22.5" cy="226.0" r="2" stroke="#1e88e5" stroke-width="1.5" fill="none"/><path d="M16 281.5H37M16 296.5H37M19 279.0V299.0M34 279.0V299.0" stroke="#505050" stroke-width="2" fill="none"/><clipPath id="sh"><rect x="20.5" y="282.5" width="12" height="13"/></clipPath><path d="M15 292.0L22 299.0M15 286.0L29 300.0M17 281.0L35 299.0M22 280.0L37 295.0M28 280.0L38 290.0" stroke="#1e88e5" stroke-width="1.8" fill="none" clip-path="url(#sh)"/><path d="M18.5 350.0A8 8 0 0 1 32 346.0" stroke="#505050" stroke-width="1.8" fill="none"/><path d="M34.5 352.0A8 8 0 0 1 21 356.0" stroke="#505050" stroke-width="1.8" fill="none"/><path d="M33 342.0V347.0H28" stroke="#1e88e5" stroke-width="2" fill="none"/><path d="M20 360.0V355.0H25" stroke="#1e88e5" stroke-width="2" fill="none"/><path d="M17 412.0L26.5 403.5L36 412.0M19.5 410.0V420.0H24V413.0H29V420.0H33.5V410.0" stroke="#505050" stroke-width="1.8" fill="none"/><path d="M20 403.0V409.0" stroke="#1e88e5" stroke-width="2" fill="none"/><circle cx="26.5" cy="474.0" r="8" stroke="#505050" stroke-width="1.6" fill="none" stroke-dasharray="2.2 1.6"/><path d="M27.5 468.0L23 475.0H26.5L25.5 480.0L30 473.0H26.5Z" fill="#1e88e5"/><path d="M26.5 525.0L21.5 532.0H23.5L19.5 537.0H22L18 542.0H35L31 537.0H33.5L29.5 532.0H31.5Z" stroke="#505050" stroke-width="1.6" fill="none" stroke-linejoin="round"/><path d="M26.5 536.0V546.0" stroke="#1e88e5" stroke-width="2" fill="none"/><path d="M18 591.0L23 603.0L27 596.0" stroke="#505050" stroke-width="2.4" fill="none" stroke-linejoin="round"/><path d="M24 604.0L33 590.0" stroke="#1e88e5" stroke-width="2.6" fill="none"/><path d="M17.5 652.5H35.5V665.5H17.5Z" stroke="#505050" stroke-width="1.8" fill="none"/><path d="M17.5 652.5L26.5 659.5L35.5 652.5Z" fill="#1e88e5"/></svg>
<div class="a" style="left:55px;top:128px;width:1581px;height:741px;background:#000;"></div>
<svg class="a" style="left:55px;top:128px" width="1581" height="741" viewBox="55 128 1581 741" shape-rendering="crispEdges"><rect x="343.5" y="131.5" width="1004" height="734" stroke="#66d8cc" stroke-width="1" fill="none"/><rect x="356.5" y="144.5" width="978" height="708" stroke="#1ff2f2" stroke-width="3" fill="none"/><path d="M589.8 184.0L589.8 221.5" stroke="#46dc46" stroke-width="1" fill="none"/><path d="M607.4 184.0L607.4 221.5" stroke="#46dc46" stroke-width="1" fill="none"/><path d="M680.5 184.0L680.5 221.5" stroke="#46dc46" stroke-width="1" fill="none"/><path d="M702.5 184.0L702.5 221.5" stroke="#46dc46" stroke-width="1" fill="none"/><path d="M726.2 184.0L726.2 221.5" stroke="#46dc46" stroke-width="1" fill="none"/><path d="M761.5 184.0L761.5 221.5" stroke="#46dc46" stroke-width="1" fill="none"/><path d="M794.4 184.0L794.4 221.5" stroke="#46dc46" stroke-width="1" fill="none"/><path d="M799.3 184.0L799.3 221.5" stroke="#46dc46" stroke-width="1" fill="none"/><path d="M836.7 184.0L836.7 221.5" stroke="#46dc46" stroke-width="1" fill="none"/><path d="M869.4 184.0L869.4 221.5" stroke="#46dc46" stroke-width="1" fill="none"/><path d="M902.6 184.0L902.6 221.5" stroke="#46dc46" stroke-width="1" fill="none"/><path d="M1005.4 184.0L1005.4 221.5" stroke="#46dc46" stroke-width="1" fill="none"/><path d="M1107.4 184.0L1107.4 221.5" stroke="#46dc46" stroke-width="1" fill="none"/><path d="M1134.3 184.0L1134.3 221.5" stroke="#46dc46" stroke-width="1" fill="none"/><path d="M600.5 191.0L600.5 216.0" stroke="#46dc46" stroke-width="1" fill="none"/><path d="M1113.0 189.0L1113.0 216.0" stroke="#46dc46" stroke-width="1" fill="none"/><path d="M599.0 193.5L1117.0 193.5" stroke="#46dc46" stroke-width="1" fill="none"/><path d="M588.0 206.5L1117.0 206.5" stroke="#46dc46" stroke-width="1" fill="none"/><circle cx="589.8" cy="178.8" r="5.3" stroke="#46dc46" stroke-width="1" fill="none" shape-rendering="geometricPrecision"/><text x="589.8" y="182.2" font-size="9" fill="#ffffff" text-anchor="middle" font-family="Liberation Sans" font-weight="bold">8</text><circle cx="607.4" cy="178.8" r="5.3" stroke="#46dc46" stroke-width="1" fill="none" shape-rendering="geometricPrecision"/><text x="607.4" y="182.2" font-size="9" fill="#ffffff" text-anchor="middle" font-family="Liberation Sans" font-weight="bold">9</text><circle cx="680.5" cy="178.8" r="5.3" stroke="#46dc46" stroke-width="1" fill="none" shape-rendering="geometricPrecision"/><text x="680.5" y="182.2" font-size="9" fill="#ffffff" text-anchor="middle" font-family="Liberation Sans" font-weight="bold">10</text><circle cx="702.5" cy="178.8" r="5.3" stroke="#46dc46" stroke-width="1" fill="none" shape-rendering="geometricPrecision"/><text x="702.5" y="182.2" font-size="9" fill="#ffffff" text-anchor="middle" font-family="Liberation Sans" font-weight="bold">11</text><circle cx="726.2" cy="178.8" r="5.3" stroke="#46dc46" stroke-width="1" fill="none" shape-rendering="geometricPrecision"/><text x="726.2" y="182.2" font-size="9" fill="#ffffff" text-anchor="middle" font-family="Liberation Sans" font-weight="bold">10</text><circle cx="761.5" cy="178.8" r="5.3" stroke="#46dc46" stroke-width="1" fill="none" shape-rendering="geometricPrecision"/><text x="761.5" y="182.2" font-size="9" fill="#ffffff" text-anchor="middle" font-family="Liberation Sans" font-weight="bold">12</text><circle cx="789.5" cy="178.8" r="5.3" stroke="#46dc46" stroke-width="1" fill="none" shape-rendering="geometricPrecision"/><text x="789.5" y="182.2" font-size="9" fill="#ffffff" text-anchor="middle" font-family="Liberation Sans" font-weight="bold">20</text><circle cx="805.0" cy="178.8" r="5.3" stroke="#46dc46" stroke-width="1" fill="none" shape-rendering="geometricPrecision"/><text x="805.0" y="182.2" font-size="9" fill="#ffffff" text-anchor="middle" font-family="Liberation Sans" font-weight="bold">13</text><circle cx="836.7" cy="178.8" r="5.3" stroke="#46dc46" stroke-width="1" fill="none" shape-rendering="geometricPrecision"/><text x="836.7" y="182.2" font-size="9" fill="#ffffff" text-anchor="middle" font-family="Liberation Sans" font-weight="bold">10</text><circle cx="869.4" cy="178.8" r="5.3" stroke="#46dc46" stroke-width="1" fill="none" shape-rendering="geometricPrecision"/><text x="869.4" y="182.2" font-size="9" fill="#ffffff" text-anchor="middle" font-family="Liberation Sans" font-weight="bold">10</text><circle cx="902.6" cy="178.8" r="5.3" stroke="#46dc46" stroke-width="1" fill="none" shape-rendering="geometricPrecision"/><text x="902.6" y="182.2" font-size="9" fill="#ffffff" text-anchor="middle" font-family="Liberation Sans" font-weight="bold">14</text><circle cx="1005.4" cy="178.8" r="5.3" stroke="#46dc46" stroke-width="1" fill="none" shape-rendering="geometricPrecision"/><text x="1005.4" y="182.2" font-size="9" fill="#ffffff" text-anchor="middle" font-family="Liberation Sans" font-weight="bold">15</text><circle cx="1107.4" cy="178.8" r="5.3" stroke="#46dc46" stroke-width="1" fill="none" shape-rendering="geometricPrecision"/><text x="1107.4" y="182.2" font-size="9" fill="#ffffff" text-anchor="middle" font-family="Liberation Sans" font-weight="bold">16</text><circle cx="1134.3" cy="178.8" r="5.3" stroke="#46dc46" stroke-width="1" fill="none" shape-rendering="geometricPrecision"/><text x="1134.3" y="182.2" font-size="9" fill="#ffffff" text-anchor="middle" font-family="Liberation Sans" font-weight="bold">17</text><rect x="595.1" y="200.5" width="7.0" height="4.0" fill="#ffffff" opacity="0.8"/><rect x="642.5" y="200.5" width="7.0" height="4.0" fill="#ffffff" opacity="0.8"/><rect x="687.5" y="200.5" width="7.0" height="4.0" fill="#ffffff" opacity="0.8"/><rect x="708.5" y="200.5" width="7.0" height="4.0" fill="#ffffff" opacity="0.8"/><rect x="740.1" y="200.5" width="7.0" height="4.0" fill="#ffffff" opacity="0.8"/><rect x="774.3" y="200.5" width="7.0" height="4.0" fill="#ffffff" opacity="0.8"/><rect x="814.1" y="200.5" width="7.0" height="4.0" fill="#ffffff" opacity="0.8"/><rect x="849.5" y="200.5" width="7.0" height="4.0" fill="#ffffff" opacity="0.8"/><rect x="882.0" y="200.5" width="7.0" height="4.0" fill="#ffffff" opacity="0.8"/><rect x="950.0" y="200.5" width="7.0" height="4.0" fill="#ffffff" opacity="0.8"/><rect x="1052.5" y="200.5" width="7.0" height="4.0" fill="#ffffff" opacity="0.8"/><rect x="1107.5" y="200.5" width="7.0" height="4.0" fill="#ffffff" opacity="0.8"/><rect x="853.0" y="188.0" width="8.0" height="4.0" fill="#ffffff" opacity="0.8"/><path d="M589.3 742.0L589.3 781.0" stroke="#46dc46" stroke-width="1" fill="none"/><path d="M606.9 742.0L606.9 781.0" stroke="#46dc46" stroke-width="1" fill="none"/><path d="M697.4 742.0L697.4 781.0" stroke="#46dc46" stroke-width="1" fill="none"/><path d="M726.7 742.0L726.7 781.0" stroke="#46dc46" stroke-width="1" fill="none"/><path d="M760.7 742.0L760.7 781.0" stroke="#46dc46" stroke-width="1" fill="none"/><path d="M794.4 742.0L794.4 781.0" stroke="#46dc46" stroke-width="1" fill="none"/><path d="M799.3 742.0L799.3 781.0" stroke="#46dc46" stroke-width="1" fill="none"/><path d="M836.6 742.0L836.6 781.0" stroke="#46dc46" stroke-width="1" fill="none"/><path d="M869.5 742.0L869.5 781.0" stroke="#46dc46" stroke-width="1" fill="none"/><path d="M902.5 742.0L902.5 781.0" stroke="#46dc46" stroke-width="1" fill="none"/><path d="M1005.0 742.0L1005.0 781.0" stroke="#46dc46" stroke-width="1" fill="none"/><path d="M1107.4 742.0L1107.4 781.0" stroke="#46dc46" stroke-width="1" fill="none"/><path d="M1130.0 742.0L1130.0 781.0" stroke="#46dc46" stroke-width="1" fill="none"/><path d="M1134.0 742.0L1134.0 781.0" stroke="#46dc46" stroke-width="1" fill="none"/><path d="M600.0 752.0L600.0 778.0" stroke="#46dc46" stroke-width="1" fill="none"/><path d="M589.0 760.5L1137.0 760.5" stroke="#46dc46" stroke-width="1" fill="none"/><path d="M598.5 772.5L1131.0 772.5" stroke="#46dc46" stroke-width="1" fill="none"/><circle cx="589.3" cy="786.8" r="5.3" stroke="#46dc46" stroke-width="1" fill="none" shape-rendering="geometricPrecision"/><text x="589.3" y="790.2" font-size="9" fill="#ffffff" text-anchor="middle" font-family="Liberation Sans" font-weight="bold">8</text><circle cx="606.9" cy="786.8" r="5.3" stroke="#46dc46" stroke-width="1" fill="none" shape-rendering="geometricPrecision"/><text x="606.9" y="790.2" font-size="9" fill="#ffffff" text-anchor="middle" font-family="Liberation Sans" font-weight="bold">9</text><circle cx="697.4" cy="786.8" r="5.3" stroke="#46dc46" stroke-width="1" fill="none" shape-rendering="geometricPrecision"/><text x="697.4" y="790.2" font-size="9" fill="#ffffff" text-anchor="middle" font-family="Liberation Sans" font-weight="bold">11</text><circle cx="726.7" cy="786.8" r="5.3" stroke="#46dc46" stroke-width="1" fill="none" shape-rendering="geometricPrecision"/><text x="726.7" y="790.2" font-size="9" fill="#ffffff" text-anchor="middle" font-family="Liberation Sans" font-weight="bold">10</text><circle cx="760.7" cy="786.8" r="5.3" stroke="#46dc46" stroke-width="1" fill="none" shape-rendering="geometricPrecision"/><text x="760.7" y="790.2" font-size="9" fill="#ffffff" text-anchor="middle" font-family="Liberation Sans" font-weight="bold">12</text><circle cx="789.7" cy="786.8" r="5.3" stroke="#46dc46" stroke-width="1" fill="none" shape-rendering="geometricPrecision"/><text x="789.7" y="790.2" font-size="9" fill="#ffffff" text-anchor="middle" font-family="Liberation Sans" font-weight="bold">20</text><circle cx="804.7" cy="786.8" r="5.3" stroke="#46dc46" stroke-width="1" fill="none" shape-rendering="geometricPrecision"/><text x="804.7" y="790.2" font-size="9" fill="#ffffff" text-anchor="middle" font-family="Liberation Sans" font-weight="bold">13</text><circle cx="836.6" cy="786.8" r="5.3" stroke="#46dc46" stroke-width="1" fill="none" shape-rendering="geometricPrecision"/><text x="836.6" y="790.2" font-size="9" fill="#ffffff" text-anchor="middle" font-family="Liberation Sans" font-weight="bold">10</text><circle cx="869.5" cy="786.8" r="5.3" stroke="#46dc46" stroke-width="1" fill="none" shape-rendering="geometricPrecision"/><text x="869.5" y="790.2" font-size="9" fill="#ffffff" text-anchor="middle" font-family="Liberation Sans" font-weight="bold">10</text><circle cx="902.5" cy="786.8" r="5.3" stroke="#46dc46" stroke-width="1" fill="none" shape-rendering="geometricPrecision"/><text x="902.5" y="790.2" font-size="9" fill="#ffffff" text-anchor="middle" font-family="Liberation Sans" font-weight="bold">14</text><circle cx="1005.0" cy="786.8" r="5.3" stroke="#46dc46" stroke-width="1" fill="none" shape-rendering="geometricPrecision"/><text x="1005.0" y="790.2" font-size="9" fill="#ffffff" text-anchor="middle" font-family="Liberation Sans" font-weight="bold">15</text><circle cx="1108.4" cy="786.8" r="5.3" stroke="#46dc46" stroke-width="1" fill="none" shape-rendering="geometricPrecision"/><text x="1108.4" y="790.2" font-size="9" fill="#ffffff" text-anchor="middle" font-family="Liberation Sans" font-weight="bold">16</text><circle cx="1134.0" cy="786.8" r="5.3" stroke="#46dc46" stroke-width="1" fill="none" shape-rendering="geometricPrecision"/><text x="1134.0" y="790.2" font-size="9" fill="#ffffff" text-anchor="middle" font-family="Liberation Sans" font-weight="bold">17</text><rect x="595.0" y="754.5" width="7.0" height="4.0" fill="#ffffff" opacity="0.8"/><rect x="648.1" y="754.5" width="7.0" height="4.0" fill="#ffffff" opacity="0.8"/><rect x="707.8" y="754.5" width="7.0" height="4.0" fill="#ffffff" opacity="0.8"/><rect x="740.7" y="754.5" width="7.0" height="4.0" fill="#ffffff" opacity="0.8"/><rect x="774.5" y="754.5" width="7.0" height="4.0" fill="#ffffff" opacity="0.8"/><rect x="792.5" y="754.5" width="7.0" height="4.0" fill="#ffffff" opacity="0.8"/><rect x="814.5" y="754.5" width="7.0" height="4.0" fill="#ffffff" opacity="0.8"/><rect x="849.5" y="754.5" width="7.0" height="4.0" fill="#ffffff" opacity="0.8"/><rect x="882.5" y="754.5" width="7.0" height="4.0" fill="#ffffff" opacity="0.8"/><rect x="950.3" y="754.5" width="7.0" height="4.0" fill="#ffffff" opacity="0.8"/><rect x="1052.5" y="754.5" width="7.0" height="4.0" fill="#ffffff" opacity="0.8"/><rect x="1115.1" y="754.5" width="7.0" height="4.0" fill="#ffffff" opacity="0.8"/><rect x="1129.0" y="754.5" width="7.0" height="4.0" fill="#ffffff" opacity="0.8"/><rect x="860.8" y="766.9" width="8.0" height="4.0" fill="#ffffff" opacity="0.8"/><path d="M489.0 292.5L540.0 292.5" stroke="#46dc46" stroke-width="1" fill="none"/><circle cx="483.5" cy="292.5" r="5.3" stroke="#46dc46" stroke-width="1" fill="none" shape-rendering="geometricPrecision"/><text x="483.5" y="295.9" font-size="9" fill="#ffffff" text-anchor="middle" font-family="Liberation Sans" font-weight="bold">F</text><path d="M1172.7 292.5L1222.0 292.5" stroke="#46dc46" stroke-width="1" fill="none"/><circle cx="1227.6" cy="292.5" r="5.3" stroke="#46dc46" stroke-width="1" fill="none" shape-rendering="geometricPrecision"/><text x="1227.6" y="295.9" font-size="9" fill="#ffffff" text-anchor="middle" font-family="Liberation Sans" font-weight="bold">F</text><path d="M489.0 306.5L540.0 306.5" stroke="#46dc46" stroke-width="1" fill="none"/><circle cx="483.5" cy="306.5" r="5.3" stroke="#46dc46" stroke-width="1" fill="none" shape-rendering="geometricPrecision"/><text x="483.5" y="309.9" font-size="9" fill="#ffffff" text-anchor="middle" font-family="Liberation Sans" font-weight="bold">E</text><path d="M1172.7 306.5L1222.0 306.5" stroke="#46dc46" stroke-width="1" fill="none"/><circle cx="1227.6" cy="306.5" r="5.3" stroke="#46dc46" stroke-width="1" fill="none" shape-rendering="geometricPrecision"/><text x="1227.6" y="309.9" font-size="9" fill="#ffffff" text-anchor="middle" font-family="Liberation Sans" font-weight="bold">E</text><path d="M489.0 366.3L540.0 366.3" stroke="#46dc46" stroke-width="1" fill="none"/><circle cx="483.5" cy="366.3" r="5.3" stroke="#46dc46" stroke-width="1" fill="none" shape-rendering="geometricPrecision"/><text x="483.5" y="369.7" font-size="9" fill="#ffffff" text-anchor="middle" font-family="Liberation Sans" font-weight="bold">1</text><path d="M1172.7 366.3L1222.0 366.3" stroke="#46dc46" stroke-width="1" fill="none"/><circle cx="1227.6" cy="366.3" r="5.3" stroke="#46dc46" stroke-width="1" fill="none" shape-rendering="geometricPrecision"/><text x="1227.6" y="369.7" font-size="9" fill="#ffffff" text-anchor="middle" font-family="Liberation Sans" font-weight="bold">1</text><path d="M489.0 409.0L540.0 409.0" stroke="#46dc46" stroke-width="1" fill="none"/><circle cx="483.5" cy="409.0" r="5.3" stroke="#46dc46" stroke-width="1" fill="none" shape-rendering="geometricPrecision"/><text x="483.5" y="412.4" font-size="9" fill="#ffffff" text-anchor="middle" font-family="Liberation Sans" font-weight="bold">D</text><path d="M1172.7 409.0L1222.0 409.0" stroke="#46dc46" stroke-width="1" fill="none"/><circle cx="1227.6" cy="409.0" r="5.3" stroke="#46dc46" stroke-width="1" fill="none" shape-rendering="geometricPrecision"/><text x="1227.6" y="412.4" font-size="9" fill="#ffffff" text-anchor="middle" font-family="Liberation Sans" font-weight="bold">D</text><path d="M489.0 478.5L540.0 478.5" stroke="#46dc46" stroke-width="1" fill="none"/><circle cx="483.5" cy="478.5" r="5.3" stroke="#46dc46" stroke-width="1" fill="none" shape-rendering="geometricPrecision"/><text x="483.5" y="481.9" font-size="9" fill="#ffffff" text-anchor="middle" font-family="Liberation Sans" font-weight="bold">1</text><path d="M1172.7 478.5L1222.0 478.5" stroke="#46dc46" stroke-width="1" fill="none"/><circle cx="1227.6" cy="478.5" r="5.3" stroke="#46dc46" stroke-width="1" fill="none" shape-rendering="geometricPrecision"/><text x="1227.6" y="481.9" font-size="9" fill="#ffffff" text-anchor="middle" font-family="Liberation Sans" font-weight="bold">1</text><path d="M489.0 512.1L540.0 512.1" stroke="#46dc46" stroke-width="1" fill="none"/><circle cx="483.5" cy="512.1" r="5.3" stroke="#46dc46" stroke-width="1" fill="none" shape-rendering="geometricPrecision"/><text x="483.5" y="515.5" font-size="9" fill="#ffffff" text-anchor="middle" font-family="Liberation Sans" font-weight="bold">C</text><path d="M1172.7 512.1L1222.0 512.1" stroke="#46dc46" stroke-width="1" fill="none"/><circle cx="1227.6" cy="512.1" r="5.3" stroke="#46dc46" stroke-width="1" fill="none" shape-rendering="geometricPrecision"/><text x="1227.6" y="515.5" font-size="9" fill="#ffffff" text-anchor="middle" font-family="Liberation Sans" font-weight="bold">C</text><path d="M489.0 580.0L540.0 580.0" stroke="#46dc46" stroke-width="1" fill="none"/><circle cx="483.5" cy="580.0" r="5.3" stroke="#46dc46" stroke-width="1" fill="none" shape-rendering="geometricPrecision"/><text x="483.5" y="583.4" font-size="9" fill="#ffffff" text-anchor="middle" font-family="Liberation Sans" font-weight="bold">2</text><path d="M1172.7 580.0L1222.0 580.0" stroke="#46dc46" stroke-width="1" fill="none"/><circle cx="1227.6" cy="580.0" r="5.3" stroke="#46dc46" stroke-width="1" fill="none" shape-rendering="geometricPrecision"/><text x="1227.6" y="583.4" font-size="9" fill="#ffffff" text-anchor="middle" font-family="Liberation Sans" font-weight="bold">2</text><path d="M489.0 614.7L540.0 614.7" stroke="#46dc46" stroke-width="1" fill="none"/><circle cx="483.5" cy="614.7" r="5.3" stroke="#46dc46" stroke-width="1" fill="none" shape-rendering="geometricPrecision"/><text x="483.5" y="618.1" font-size="9" fill="#ffffff" text-anchor="middle" font-family="Liberation Sans" font-weight="bold">B</text><path d="M1172.7 614.7L1222.0 614.7" stroke="#46dc46" stroke-width="1" fill="none"/><circle cx="1227.6" cy="614.7" r="5.3" stroke="#46dc46" stroke-width="1" fill="none" shape-rendering="geometricPrecision"/><text x="1227.6" y="618.1" font-size="9" fill="#ffffff" text-anchor="middle" font-family="Liberation Sans" font-weight="bold">B</text><path d="M489.0 636.8L540.0 636.8" stroke="#46dc46" stroke-width="1" fill="none"/><circle cx="483.5" cy="636.8" r="5.3" stroke="#46dc46" stroke-width="1" fill="none" shape-rendering="geometricPrecision"/><text x="483.5" y="640.2" font-size="9" fill="#ffffff" text-anchor="middle" font-family="Liberation Sans" font-weight="bold">1</text><path d="M1172.7 636.8L1222.0 636.8" stroke="#46dc46" stroke-width="1" fill="none"/><circle cx="1227.6" cy="636.8" r="5.3" stroke="#46dc46" stroke-width="1" fill="none" shape-rendering="geometricPrecision"/><text x="1227.6" y="640.2" font-size="9" fill="#ffffff" text-anchor="middle" font-family="Liberation Sans" font-weight="bold">1</text><path d="M489.0 717.0L540.0 717.0" stroke="#46dc46" stroke-width="1" fill="none"/><circle cx="483.5" cy="717.0" r="5.3" stroke="#46dc46" stroke-width="1" fill="none" shape-rendering="geometricPrecision"/><text x="483.5" y="720.4" font-size="9" fill="#ffffff" text-anchor="middle" font-family="Liberation Sans" font-weight="bold">A</text><path d="M1172.7 717.0L1222.0 717.0" stroke="#46dc46" stroke-width="1" fill="none"/><circle cx="1227.6" cy="717.0" r="5.3" stroke="#46dc46" stroke-width="1" fill="none" shape-rendering="geometricPrecision"/><text x="1227.6" y="720.4" font-size="9" fill="#ffffff" text-anchor="middle" font-family="Liberation Sans" font-weight="bold">A</text><path d="M498.6 299.0L498.6 637.0" stroke="#46dc46" stroke-width="1" fill="none"/><path d="M511.2 291.0L511.2 717.0" stroke="#46dc46" stroke-width="1" fill="none"/><path d="M496.0 299.4L533.0 299.4" stroke="#46dc46" stroke-width="1" fill="none"/><path d="M1214.4 299.0L1214.4 637.0" stroke="#46dc46" stroke-width="1" fill="none"/><path d="M1172.0 299.2L1216.0 299.2" stroke="#46dc46" stroke-width="1" fill="none"/><rect x="505.0" y="293.5" width="4.0" height="7.0" fill="#ffffff" opacity="0.8"/><rect x="505.0" y="333.5" width="4.0" height="7.0" fill="#ffffff" opacity="0.8"/><rect x="505.0" y="384.5" width="4.0" height="7.0" fill="#ffffff" opacity="0.8"/><rect x="505.0" y="441.5" width="4.0" height="7.0" fill="#ffffff" opacity="0.8"/><rect x="505.0" y="491.5" width="4.0" height="7.0" fill="#ffffff" opacity="0.8"/><rect x="505.0" y="542.5" width="4.0" height="7.0" fill="#ffffff" opacity="0.8"/><rect x="505.0" y="593.5" width="4.0" height="7.0" fill="#ffffff" opacity="0.8"/><rect x="505.0" y="621.5" width="4.0" height="7.0" fill="#ffffff" opacity="0.8"/><rect x="505.0" y="672.5" width="4.0" height="7.0" fill="#ffffff" opacity="0.8"/><rect x="490.0" y="371.0" width="4.0" height="8.0" fill="#ffffff" opacity="0.8"/><rect x="1206.5" y="464.0" width="4.0" height="8.0" fill="#ffffff" opacity="0.8"/><text x="786" y="828" font-size="16.5" textLength="71.5" lengthAdjust="spacingAndGlyphs" fill="#ffff3c" font-family="Liberation Serif, serif" font-weight="bold">弱电平面图</text><text x="895" y="825.8" font-size="11.5" fill="#ffff3c" text-anchor="middle" font-family="Liberation Serif" font-weight="bold">1:100</text><path d="M781.5 832.5L914.5 832.5" stroke="#ffff3c" stroke-width="2" fill="none"/><path d="M781.5 836.3L914.5 836.3" stroke="#ffff3c" stroke-width="1" fill="none"/><path d="M690.8 230.0L690.8 298.0" stroke="#e63ce6" stroke-width="1" fill="none"/><path d="M693.0 230.0L693.0 297.5" stroke="#ffff78" stroke-width="1" fill="none"/><path d="M697.7 230.0L697.7 292.7" stroke="#ffff78" stroke-width="1" fill="none"/><path d="M799.8 230.0L799.8 292.7" stroke="#ffff78" stroke-width="1" fill="none"/><path d="M804.7 230.0L804.7 297.5" stroke="#ffff78" stroke-width="1" fill="none"/><path d="M697.7 249.2L799.8 249.2" stroke="#ffff78" stroke-width="1" fill="none"/><path d="M697.7 252.5L799.8 252.5" stroke="#ffff78" stroke-width="1" fill="none"/><path d="M697.7 292.7L799.8 292.7" stroke="#ffff78" stroke-width="1" fill="none"/><path d="M693.0 297.5L805.0 297.5" stroke="#ffff78" stroke-width="1" fill="none"/><path d="M694.5 255.0L694.5 288.0" stroke="#46dc46" stroke-width="1" fill="none"/><path d="M721.0 253.0L721.0 292.5" stroke="#e63ce6" stroke-width="1" fill="none"/><path d="M725.1 253.0L725.1 292.5" stroke="#e63ce6" stroke-width="1" fill="none"/><path d="M729.2 253.0L729.2 292.5" stroke="#e63ce6" stroke-width="1" fill="none"/><path d="M733.3 253.0L733.3 292.5" stroke="#e63ce6" stroke-width="1" fill="none"/><path d="M737.4 253.0L737.4 292.5" stroke="#e63ce6" stroke-width="1" fill="none"/><path d="M741.5 253.0L741.5 292.5" stroke="#e63ce6" stroke-width="1" fill="none"/><path d="M745.6 253.0L745.6 292.5" stroke="#e63ce6" stroke-width="1" fill="none"/><path d="M749.7 253.0L749.7 292.5" stroke="#e63ce6" stroke-width="1" fill="none"/><path d="M753.8 253.0L753.8 292.5" stroke="#e63ce6" stroke-width="1" fill="none"/><path d="M757.9 253.0L757.9 292.5" stroke="#e63ce6" stroke-width="1" fill="none"/><path d="M762.0 253.0L762.0 292.5" stroke="#e63ce6" stroke-width="1" fill="none"/><path d="M766.1 253.0L766.1 292.5" stroke="#e63ce6" stroke-width="1" fill="none"/><rect x="721.0" y="271.5" width="48.0" height="3.5" fill="#e63ce6"/><path d="M776.0 262.3L713.0 262.3L713.0 283.6L776.0 283.6" stroke="#e63ce6" stroke-width="1" fill="none"/><path d="M737.0 271.0L750.0 253.0" stroke="#e63ce6" stroke-width="1" fill="none"/><path d="M697.7 286L706 292.7H697.7Z M805 286L797 292.7H805Z" fill="#c3c3c3"/><path d="M805.0 280.0L812.0 272.0L805.0 264.0L812.0 258.0" stroke="#46dc46" stroke-width="1" fill="none"/><path d="M805.0 262.0L812.0 262.0L820.0 252.0L828.0 262.0L836.0 254.0" stroke="#46dc46" stroke-width="1" fill="none"/><path d="M835.9 230.0L835.9 294.0" stroke="#4ae0f0" stroke-width="1" fill="none"/><path d="M837.6 230.0L837.6 294.0" stroke="#4ae0f0" stroke-width="1" fill="none"/><path d="M805.0 254.0L836.0 254.0" stroke="#4ae0f0" stroke-width="1" fill="none"/><path d="M805.0 256.0L836.0 256.0" stroke="#4ae0f0" stroke-width="1" fill="none"/><path d="M817.7 304.5L842.8 256.0" stroke="#ffffff" stroke-width="1" fill="none"/><text x="857.0" y="256.0" font-size="5.5" fill="#ffffff" text-anchor="middle" font-family="Liberation Sans" font-weight="bold">楼梯前室入口</text><path d="M598.5 298.7L690.0 298.7" stroke="#e63ce6" stroke-width="1" fill="none"/><path d="M674.5 298.7L909.5 298.7" stroke="#ffff78" stroke-width="1" fill="none"/><path d="M676.0 301.5L909.5 301.5" stroke="#ffff78" stroke-width="1" fill="none"/><path d="M805.0 294.6L1131.4 294.6" stroke="#4ae0f0" stroke-width="1" fill="none"/><path d="M805.0 297.8L1135.0 297.8" stroke="#4ae0f0" stroke-width="1" fill="none"/><path d="M925.0 300.0L1110.0 300.0" stroke="#4ae0f0" stroke-width="1" fill="none"/><path d="M925.0 302.5L1110.0 302.5" stroke="#4ae0f0" stroke-width="1" fill="none"/><path d="M1110.0 299.2L1135.0 299.2" stroke="#e63ce6" stroke-width="1" fill="none"/><path d="M1131.4 231.3L1131.4 294.6" stroke="#4ae0f0" stroke-width="1" fill="none"/><path d="M1135.0 231.3L1135.0 299.2" stroke="#e63ce6" stroke-width="1" fill="none"/><path d="M1133.5 255.0L1133.5 285.0" stroke="#46dc46" stroke-width="1" fill="none"/><path d="M1010.0 292.0L1102.0 292.0" stroke="#ffff78" stroke-width="1" fill="none"/><path d="M1010.0 297.3L1102.0 297.3" stroke="#ffff78" stroke-width="1" fill="none"/><path d="M1091.4 276.6L1112.9 276.6L1112.9 292.8L1091.4 292.8L1091.4 276.6" stroke="#4ae0f0" stroke-width="1.5" fill="none"/><path d="M1094.0 280.0L1101.0 280.0L1101.0 290.0" stroke="#ffffff" stroke-width="1" fill="none"/><path d="M615.0 301.2L672.0 301.2" stroke="#46dc46" stroke-width="1" fill="none"/><path d="M642.0 299.0L656.0 299.0" stroke="#6a6aff" stroke-width="1" fill="none"/><path d="M686.0 299.0L702.0 299.0" stroke="#6a6aff" stroke-width="1" fill="none"/><path d="M598.7 298.7L598.7 462.5" stroke="#e63ce6" stroke-width="1" fill="none"/><path d="M568.0 462.5L598.7 462.5" stroke="#e63ce6" stroke-width="1" fill="none"/><path d="M601.2 313.0L601.2 607.0" stroke="#4ae0f0" stroke-width="1" fill="none"/><path d="M603.6 313.0L603.6 607.0" stroke="#4ae0f0" stroke-width="1" fill="none"/><path d="M602.0 328.8L602.0 384.8" stroke="#46dc46" stroke-width="1.5" fill="none"/><path d="M602.0 418.0L602.0 437.0" stroke="#46dc46" stroke-width="1.5" fill="none"/><path d="M642.1 301.0L642.1 490.0" stroke="#4ae0f0" stroke-width="1" fill="none"/><path d="M644.0 301.0L644.0 490.0" stroke="#4ae0f0" stroke-width="1" fill="none"/><path d="M615.5 390.7L615.5 490.0" stroke="#4ae0f0" stroke-width="1" fill="none"/><path d="M618.0 390.7L618.0 490.0" stroke="#4ae0f0" stroke-width="1" fill="none"/><path d="M687.0 377.6L673.1 377.6L673.1 490.0" stroke="#4ae0f0" stroke-width="1" fill="none"/><path d="M687.0 388.3L679.0 388.3L679.0 490.0" stroke="#4ae0f0" stroke-width="1" fill="none"/><path d="M688.6 362.0L688.6 490.0" stroke="#4ae0f0" stroke-width="1" fill="none"/><path d="M603.0 481.9L690.0 481.9" stroke="#4ae0f0" stroke-width="1" fill="none"/><path d="M603.0 484.0L690.0 484.0" stroke="#4ae0f0" stroke-width="1" fill="none"/><path d="M616 482V467A13 15 0 0 1 629 482M682.6 482V467A12 15 0 0 0 670.6 482" stroke="#46dc46" stroke-width="1" fill="none"/><path d="M604.0 393.0L609.0 390.0L612.0 393.0" stroke="#46dc46" stroke-width="1" fill="none"/><path d="M604.0 393.0L616.0 393.0" stroke="#4ae0f0" stroke-width="1" fill="none"/><path d="M604.0 400.0L609.0 397.0L612.0 400.0" stroke="#46dc46" stroke-width="1" fill="none"/><path d="M604.0 400.0L616.0 400.0" stroke="#4ae0f0" stroke-width="1" fill="none"/><path d="M604.0 440.0L609.0 437.0L612.0 440.0" stroke="#46dc46" stroke-width="1" fill="none"/><path d="M604.0 440.0L616.0 440.0" stroke="#4ae0f0" stroke-width="1" fill="none"/><path d="M604.0 448.0L609.0 445.0L612.0 448.0" stroke="#46dc46" stroke-width="1" fill="none"/><path d="M604.0 448.0L616.0 448.0" stroke="#4ae0f0" stroke-width="1" fill="none"/><path d="M681.0 305.0L687.0 302.0L690.0 305.0" stroke="#46dc46" stroke-width="1" fill="none"/><path d="M681.0 384.0L687.0 381.0L690.0 384.0" stroke="#46dc46" stroke-width="1" fill="none"/><path d="M681.0 398.0L687.0 395.0L690.0 398.0" stroke="#46dc46" stroke-width="1" fill="none"/><path d="M681.0 443.0L687.0 440.0L690.0 443.0" stroke="#46dc46" stroke-width="1" fill="none"/><path d="M681.0 450.0L687.0 447.0L690.0 450.0" stroke="#46dc46" stroke-width="1" fill="none"/><text x="620.0" y="355.5" font-size="6.5" fill="#ffffff" text-anchor="middle" font-family="Liberation Sans" font-weight="bold">写字间</text><rect x="646.0" y="381.0" width="26.0" height="4.0" fill="#ffffff" opacity="0.8"/><rect x="648.0" y="392.3" width="24.0" height="4.0" fill="#ffffff" opacity="0.8"/><rect x="639.0" y="340.5" width="4.0" height="5.0" fill="#ffffff" opacity="0.8"/><rect x="645.0" y="337.5" width="4.0" height="5.0" fill="#ffffff" opacity="0.8"/><rect x="683.0" y="363.0" width="4.0" height="9.0" fill="#ff2020"/><path d="M590.8 469.4L590.8 723.7" stroke="#ffff78" stroke-width="1" fill="none"/><path d="M595.0 469.4L595.0 723.7" stroke="#ffff78" stroke-width="1" fill="none"/><path d="M568.0 469.4L590.8 469.4" stroke="#ffff78" stroke-width="1" fill="none"/><path d="M568.0 551.4L590.8 551.4" stroke="#4ae0f0" stroke-width="1" fill="none"/><path d="M568.0 556.0L590.8 556.0" stroke="#4ae0f0" stroke-width="1" fill="none"/><path d="M576.0 556.0L576.0 583.6" stroke="#ffffff" stroke-width="1.5" fill="none"/><path d="M571.0 560.0L575.0 566.0L571.0 572.0L575.0 578.0" stroke="#46dc46" stroke-width="1" fill="none"/><path d="M569.0 584.2L590.8 584.2" stroke="#ffff78" stroke-width="1" fill="none"/><path d="M568.0 588.8L590.8 588.8" stroke="#ffff78" stroke-width="1" fill="none"/><path d="M568.0 616.5L584.0 616.5" stroke="#4ae0f0" stroke-width="1" fill="none"/><path d="M581.8 616.0L581.8 649.3" stroke="#46dc46" stroke-width="1" fill="none"/><path d="M581.8 649.3L594.0 649.3" stroke="#ffffff" stroke-width="1.5" fill="none"/><path d="M592.5 723.7L592.5 741.5L568.0 741.5" stroke="#4ae0f0" stroke-width="1" fill="none"/><path d="M595.5 723.7L595.5 744.5L568.0 744.5" stroke="#4ae0f0" stroke-width="1" fill="none"/><path d="M674.5 298.7L674.5 361.0L690.4 361.0L690.4 482.5L909.5 482.5L909.5 298.7" stroke="#ffff78" stroke-width="1" fill="none"/><path d="M674.8 301.0L691.0 301.0L691.0 361.0L674.8 361.0L674.8 301.0" stroke="#ffff78" stroke-width="1" fill="none"/><path d="M677.0 311.0L689.8 311.0L689.8 327.6L677.0 327.6L677.0 311.0" stroke="#ffffff" stroke-width="1" fill="none"/><path d="M677.0 330.0L689.8 330.0L689.8 344.3L677.0 344.3L677.0 330.0" stroke="#ffffff" stroke-width="1" fill="none"/><path d="M677.0 345.5L689.8 345.5L689.8 358.6L677.0 358.6L677.0 345.5" stroke="#ffffff" stroke-width="1" fill="none"/><path d="M678.0 328.5L689.6 328.5L689.6 330.0L678.0 330.0L678.0 328.5" stroke="#4ae0f0" stroke-width="1" fill="none"/><path d="M679.0 325.0L681.0 316.0L688.0 313.0" stroke="#ffffff" stroke-width="1" fill="none"/><path d="M679.0 342.0L681.0 334.0L688.0 332.0" stroke="#ffffff" stroke-width="1" fill="none"/><path d="M679.0 357.0L681.0 350.0L688.0 348.0" stroke="#ffffff" stroke-width="1" fill="none"/><path d="M696.2 306.3L696.2 477.0" stroke="#ffff78" stroke-width="1" fill="none"/><path d="M696.2 306.3L794.4 306.3" stroke="#ffff78" stroke-width="1" fill="none"/><path d="M794.4 306.3L794.4 477.0" stroke="#ffff78" stroke-width="1" fill="none"/><path d="M796.3 306.3L796.3 482.5" stroke="#ffff78" stroke-width="1" fill="none"/><path d="M690.0 365.6L795.0 365.6" stroke="#ffff78" stroke-width="1" fill="none"/><path d="M696.0 476.8L795.0 476.8" stroke="#ffff78" stroke-width="1" fill="none"/><path d="M725.0 366.8L725.0 477.0" stroke="#ffff78" stroke-width="1" fill="none"/><path d="M727.0 366.8L727.0 477.0" stroke="#ffff78" stroke-width="1" fill="none"/><path d="M760.6 366.8L760.6 477.0" stroke="#ffff78" stroke-width="1" fill="none"/><path d="M762.3 366.8L762.3 477.0" stroke="#ffff78" stroke-width="1" fill="none"/><path d="M727.0 443.9L760.6 443.9" stroke="#ffff78" stroke-width="1" fill="none"/><path d="M762.3 400.0L794.4 400.0" stroke="#ffff78" stroke-width="1" fill="none"/><path d="M762.3 435.0L794.4 435.0" stroke="#ffff78" stroke-width="1" fill="none"/><path d="M762.3 467.0L794.4 467.0" stroke="#ffff78" stroke-width="1" fill="none"/><path d="M769.2 372.0L790.9 372.0L790.9 396.3L769.2 396.3L769.2 372.0" stroke="#e63ce6" stroke-width="1.5" fill="none"/><path d="M765.0 377.0L765.0 391.3" stroke="#e63ce6" stroke-width="1" fill="none"/><path d="M769.2 407.5L790.9 407.5L790.9 431.3L769.2 431.3L769.2 407.5" stroke="#e63ce6" stroke-width="1.5" fill="none"/><path d="M765.0 412.5L765.0 426.3" stroke="#e63ce6" stroke-width="1" fill="none"/><path d="M769.2 440.0L790.9 440.0L790.9 464.7L769.2 464.7L769.2 440.0" stroke="#e63ce6" stroke-width="1.5" fill="none"/><path d="M765.0 445.0L765.0 459.7" stroke="#e63ce6" stroke-width="1" fill="none"/><path d="M727.7 379.0L760.6 379.0" stroke="#e63ce6" stroke-width="1" fill="none"/><path d="M727.7 383.3L760.6 383.3" stroke="#e63ce6" stroke-width="1" fill="none"/><path d="M727.7 387.6L760.6 387.6" stroke="#e63ce6" stroke-width="1" fill="none"/><path d="M727.7 391.9L760.6 391.9" stroke="#e63ce6" stroke-width="1" fill="none"/><path d="M727.7 396.2L760.6 396.2" stroke="#e63ce6" stroke-width="1" fill="none"/><path d="M727.7 400.5L760.6 400.5" stroke="#e63ce6" stroke-width="1" fill="none"/><path d="M727.7 404.8L760.6 404.8" stroke="#e63ce6" stroke-width="1" fill="none"/><path d="M727.7 409.1L760.6 409.1" stroke="#e63ce6" stroke-width="1" fill="none"/><path d="M727.7 413.4L760.6 413.4" stroke="#e63ce6" stroke-width="1" fill="none"/><path d="M727.7 417.7L760.6 417.7" stroke="#e63ce6" stroke-width="1" fill="none"/><path d="M727.7 422.0L760.6 422.0" stroke="#e63ce6" stroke-width="1" fill="none"/><path d="M744.0 372.0L756.0 372.0L756.0 427.0L744.0 427.0L744.0 372.0" stroke="#e63ce6" stroke-width="1" fill="none"/><path d="M740.0 415.0L755.0 395.0" stroke="#e63ce6" stroke-width="1" fill="none"/><path d="M697.0 366.8L725.0 366.8L725.0 375.0L697.0 375.0L697.0 366.8" stroke="#ffffff" stroke-width="1.2" fill="none"/><rect x="699.0" y="368.5" width="24.0" height="5.0" fill="#ffffff" opacity="0.7"/><path d="M720.0 338.5L757.8 338.5" stroke="#ffff78" stroke-width="1" fill="none"/><path d="M719.7 306.3L719.7 338.5" stroke="#4ae0f0" stroke-width="1" fill="none"/><path d="M721.1 306.3L721.1 338.5" stroke="#4ae0f0" stroke-width="1" fill="none"/><path d="M756.3 306.3L756.3 338.5" stroke="#4ae0f0" stroke-width="1" fill="none"/><path d="M757.8 306.3L757.8 338.5" stroke="#4ae0f0" stroke-width="1" fill="none"/><path d="M696.0 338.5L720.0 338.5" stroke="#4ae0f0" stroke-width="1" fill="none"/><path d="M758.0 338.5L794.0 338.5" stroke="#4ae0f0" stroke-width="1" fill="none"/><path d="M698.0 310.0L702.0 310.0L702.0 318.0L698.0 318.0L698.0 310.0" stroke="#e63ce6" stroke-width="1.5" fill="none"/><path d="M696.0 320.0L700.0 326.0L704.0 320.0" stroke="#ffffff" stroke-width="1" fill="none"/><path d="M709.0 310.0L713.0 310.0L713.0 318.0L709.0 318.0L709.0 310.0" stroke="#e63ce6" stroke-width="1.5" fill="none"/><path d="M707.0 320.0L711.0 326.0L715.0 320.0" stroke="#ffffff" stroke-width="1" fill="none"/><path d="M724.0 310.0L728.0 310.0L728.0 318.0L724.0 318.0L724.0 310.0" stroke="#e63ce6" stroke-width="1.5" fill="none"/><path d="M722.0 320.0L726.0 326.0L730.0 320.0" stroke="#ffffff" stroke-width="1" fill="none"/><path d="M735.0 310.0L739.0 310.0L739.0 318.0L735.0 318.0L735.0 310.0" stroke="#e63ce6" stroke-width="1.5" fill="none"/><path d="M733.0 320.0L737.0 326.0L741.0 320.0" stroke="#ffffff" stroke-width="1" fill="none"/><path d="M747.0 310.0L751.0 310.0L751.0 318.0L747.0 318.0L747.0 310.0" stroke="#e63ce6" stroke-width="1.5" fill="none"/><path d="M745.0 320.0L749.0 326.0L753.0 320.0" stroke="#ffffff" stroke-width="1" fill="none"/><rect x="733.0" y="357.3" width="60.5" height="7.7" fill="#e63ce6" opacity="0.35"/><path d="M738 338.5V332A10 10 0 0 1 748 322M776 338.5V332A10 10 0 0 0 766 322" stroke="#46dc46" stroke-width="1" fill="none"/><path d="M762.0 307.5L770.0 307.5L770.0 312.5L762.0 312.5L762.0 307.5" stroke="#e63ce6" stroke-width="1.2" fill="none"/><path d="M773.0 310.0L779.0 310.0L779.0 318.0L773.0 318.0L773.0 310.0" stroke="#e63ce6" stroke-width="1.2" fill="none"/><circle cx="742.0" cy="361.0" r="3.2" stroke="#e63ce6" stroke-width="1" fill="none" shape-rendering="geometricPrecision"/><circle cx="752.5" cy="361.0" r="3.2" stroke="#e63ce6" stroke-width="1" fill="none" shape-rendering="geometricPrecision"/><circle cx="763.0" cy="361.0" r="3.2" stroke="#e63ce6" stroke-width="1" fill="none" shape-rendering="geometricPrecision"/><circle cx="773.5" cy="361.0" r="3.2" stroke="#e63ce6" stroke-width="1" fill="none" shape-rendering="geometricPrecision"/><circle cx="784.0" cy="361.0" r="3.2" stroke="#e63ce6" stroke-width="1" fill="none" shape-rendering="geometricPrecision"/><path d="M731.0 357.0L738.0 357.0L738.0 365.0L731.0 365.0L731.0 357.0" stroke="#e63ce6" stroke-width="1.5" fill="none"/><path d="M716.0 345.0L718.0 352.0L728.0 358.0L738.0 352.0L740.0 345.0" stroke="#46dc46" stroke-width="1" fill="none"/><rect x="698.0" y="411.5" width="4.0" height="5.0" fill="#ffffff" opacity="0.8"/><rect x="736.0" y="450.5" width="10.0" height="5.0" fill="#ffffff" opacity="0.8"/><rect x="697.0" y="389.0" width="28.0" height="4.0" fill="#ffffff" opacity="0.8"/><path d="M704.0 476.0L708.0 463.0L716.0 460.0L724.0 476.0" stroke="#46dc46" stroke-width="1" fill="none"/><path d="M704.0 482.0L708.0 490.0L716.0 494.0L724.0 482.0" stroke="#46dc46" stroke-width="1" fill="none"/><path d="M742.0 443.0L745.0 435.0L750.0 440.0L756.0 434.0L760.0 443.0" stroke="#46dc46" stroke-width="1" fill="none"/><path d="M742.0 477.0L745.0 469.0L750.0 474.0L756.0 468.0L760.0 477.0" stroke="#46dc46" stroke-width="1" fill="none"/><path d="M762.3 470.5L794.4 470.5L794.4 476.4L762.3 476.4L762.3 470.5" stroke="#ffff78" stroke-width="1" fill="none"/><rect x="776.5" y="470.5" width="5.0" height="5.0" fill="#ffffff" opacity="0.8"/><path d="M802.1 310.0L802.1 490.0" stroke="#4ae0f0" stroke-width="1" fill="none"/><path d="M821.2 316.0L821.2 490.0" stroke="#4ae0f0" stroke-width="1" fill="none"/><path d="M824.3 316.0L824.3 490.0" stroke="#4ae0f0" stroke-width="1" fill="none"/><path d="M832.4 348.6L832.4 490.0" stroke="#4ae0f0" stroke-width="1" fill="none"/><path d="M799.5 299.0L799.5 306.0" stroke="#ffff78" stroke-width="1" fill="none"/><path d="M804.2 299.0L804.2 306.0" stroke="#ffff78" stroke-width="1" fill="none"/><path d="M835.0 301.5L835.0 482.5" stroke="#ffff78" stroke-width="1" fill="none"/><path d="M796.0 477.3L835.0 477.3" stroke="#46dc46" stroke-width="1" fill="none"/><path d="M796.0 481.6L835.0 481.6" stroke="#46dc46" stroke-width="1" fill="none"/><path d="M797.0 320.0L833.0 320.0" stroke="#e63ce6" stroke-width="1" fill="none"/><path d="M797.0 324.3L833.0 324.3" stroke="#e63ce6" stroke-width="1" fill="none"/><path d="M797.0 328.6L833.0 328.6" stroke="#e63ce6" stroke-width="1" fill="none"/><path d="M797.0 332.9L833.0 332.9" stroke="#e63ce6" stroke-width="1" fill="none"/><path d="M817.0 316.0L817.0 336.0" stroke="#e63ce6" stroke-width="2" fill="none"/><path d="M793.0 310.0L793.0 338.0" stroke="#ffffff" stroke-width="1" fill="none"/><path d="M797.0 310.0L797.0 338.0" stroke="#ffffff" stroke-width="1" fill="none"/><rect x="811.0" y="307.5" width="14.0" height="5.0" fill="#ffffff" opacity="0.8"/><rect x="808.0" y="325.5" width="8.0" height="5.0" fill="#ffffff" opacity="0.8"/><rect x="811.0" y="418.5" width="10.0" height="5.0" fill="#46dc46" opacity="0.8"/><path d="M822.0 462.0L826.0 455.0L830.0 460.0" stroke="#46dc46" stroke-width="1" fill="none"/><rect x="804.0" y="307.0" width="12.0" height="5.0" fill="#46dc46"/><path d="M837.6 306.2L837.6 476.4" stroke="#ffff78" stroke-width="1" fill="none"/><path d="M903.4 306.2L903.4 476.4" stroke="#ffff78" stroke-width="1" fill="none"/><path d="M837.6 306.2L903.4 306.2" stroke="#ffff78" stroke-width="1" fill="none"/><path d="M837.6 354.7L903.4 354.7" stroke="#ffff78" stroke-width="1" fill="none"/><path d="M837.6 357.3L903.4 357.3" stroke="#ffffff" stroke-width="1.5" fill="none"/><path d="M837.6 365.0L903.4 365.0" stroke="#ffff78" stroke-width="1" fill="none"/><path d="M838.5 306.5L855.8 306.5L855.8 324.4L838.5 324.4L838.5 306.5" stroke="#ffffff" stroke-width="1.5" fill="none"/><path d="M856.5 306.0L856.5 325.0" stroke="#4ae0f0" stroke-width="1.5" fill="none"/><path d="M841.0 322.0L842.0 313.0L850.0 309.0" stroke="#ffffff" stroke-width="1" fill="none"/><text x="847.0" y="321.0" font-size="9" fill="#ffffff" text-anchor="middle" font-family="Liberation Sans">风</text><path d="M855.0 326.0L895.0 326.0" stroke="#4ae0f0" stroke-width="1" fill="none"/><path d="M823.0 348.6L895.0 348.6" stroke="#4ae0f0" stroke-width="1" fill="none"/><circle cx="897.0" cy="324.0" r="3" stroke="#46dc46" stroke-width="1" fill="none" shape-rendering="geometricPrecision"/><circle cx="897.0" cy="348.0" r="3" stroke="#46dc46" stroke-width="1" fill="none" shape-rendering="geometricPrecision"/><rect x="864.0" y="334.5" width="22.0" height="5.0" fill="#ffffff" opacity="0.8"/><path d="M880.0 308.0L890.0 300.0" stroke="#4ae0f0" stroke-width="1" fill="none"/><rect x="887.0" y="307.0" width="10.0" height="4.0" fill="#46dc46"/><path d="M837.6 367.3L868.0 367.3L868.0 399.4L837.6 399.4L837.6 367.3" stroke="#ffff78" stroke-width="1" fill="none"/><path d="M837.6 401.0L868.0 401.0L868.0 429.7L837.6 429.7L837.6 401.0" stroke="#ffff78" stroke-width="1" fill="none"/><path d="M839.4 371.6L861.9 371.6L861.9 396.8L839.4 396.8L839.4 371.6" stroke="#e63ce6" stroke-width="1.5" fill="none"/><path d="M839.4 405.4L866.0 405.4L866.0 426.2L839.4 426.2L839.4 405.4" stroke="#e63ce6" stroke-width="1.5" fill="none"/><rect x="840.0" y="415.0" width="24.0" height="6.0" fill="#ffffff" opacity="0.8"/><path d="M865.0 378.0L865.0 390.0" stroke="#e63ce6" stroke-width="1.5" fill="none"/><path d="M869.7 367.0L903.4 367.0L903.4 444.4L869.7 444.4L869.7 367.0" stroke="#ffff78" stroke-width="1" fill="none"/><path d="M870.5 383.8L903.4 383.8" stroke="#e63ce6" stroke-width="1" fill="none"/><path d="M870.5 387.9L903.4 387.9" stroke="#e63ce6" stroke-width="1" fill="none"/><path d="M870.5 392.0L903.4 392.0" stroke="#e63ce6" stroke-width="1" fill="none"/><path d="M870.5 396.1L903.4 396.1" stroke="#e63ce6" stroke-width="1" fill="none"/><path d="M870.5 400.2L903.4 400.2" stroke="#e63ce6" stroke-width="1" fill="none"/><path d="M870.5 404.3L903.4 404.3" stroke="#e63ce6" stroke-width="1" fill="none"/><path d="M870.5 408.4L903.4 408.4" stroke="#e63ce6" stroke-width="1" fill="none"/><path d="M870.5 412.5L903.4 412.5" stroke="#e63ce6" stroke-width="1" fill="none"/><path d="M870.5 416.6L903.4 416.6" stroke="#e63ce6" stroke-width="1" fill="none"/><path d="M870.5 420.7L903.4 420.7" stroke="#e63ce6" stroke-width="1" fill="none"/><path d="M870.5 424.8L903.4 424.8" stroke="#e63ce6" stroke-width="1" fill="none"/><rect x="884.4" y="380.0" width="2.6" height="48.0" fill="#e63ce6"/><path d="M877.4 379.4L895.6 379.4L895.6 428.0L877.4 428.0L877.4 379.4" stroke="#e63ce6" stroke-width="1" fill="none"/><path d="M875.0 444.0L878.0 436.0L884.0 440.0L890.0 436.0L893.0 444.0" stroke="#46dc46" stroke-width="1" fill="none"/><path d="M837.0 450.0L845.0 455.0L837.0 460.0" stroke="#46dc46" stroke-width="1" fill="none"/><path d="M837.0 465.0L845.0 470.0L837.0 476.0" stroke="#46dc46" stroke-width="1" fill="none"/><path d="M895.0 445.0L903.0 445.0L903.0 476.0L895.0 476.0L895.0 445.0" stroke="#ffffff" stroke-width="1" fill="none"/><rect x="851.0" y="446.0" width="12.0" height="6.0" fill="#ffffff" opacity="0.8"/><path d="M920.7 301.0L920.7 494.6" stroke="#ffffff" stroke-width="1.2" fill="none"/><path d="M924.2 301.0L924.2 494.6" stroke="#ffffff" stroke-width="1.2" fill="none"/><path d="M598.0 491.3L924.2 491.3" stroke="#ffffff" stroke-width="1.2" fill="none"/><path d="M598.0 494.8L924.2 494.8" stroke="#ffffff" stroke-width="1.2" fill="none"/><path d="M924.7 302.0L924.7 495.0" stroke="#4ae0f0" stroke-width="1" fill="none"/><path d="M929.4 302.0L929.4 495.0" stroke="#4ae0f0" stroke-width="1" fill="none"/><path d="M931.6 302.0L931.6 495.0" stroke="#4ae0f0" stroke-width="1" fill="none"/><path d="M925.0 308.2L990.0 308.2" stroke="#4ae0f0" stroke-width="1" fill="none"/><path d="M925.0 318.6L990.0 318.6" stroke="#4ae0f0" stroke-width="1" fill="none"/><path d="M925.0 326.4L1052.0 326.4" stroke="#4ae0f0" stroke-width="1" fill="none"/><path d="M925.0 330.3L1060.0 330.3" stroke="#4ae0f0" stroke-width="1" fill="none"/><path d="M990.0 308.2L990.0 302.0" stroke="#4ae0f0" stroke-width="1" fill="none"/><path d="M1052.0 326.4L1056.0 305.0" stroke="#4ae0f0" stroke-width="1" fill="none"/><path d="M1060.0 330.3L1065.0 305.0" stroke="#4ae0f0" stroke-width="1" fill="none"/><path d="M931.0 313.0L935.0 320.0L944.0 322.0L950.0 315.0L951.0 300.0" stroke="#46dc46" stroke-width="1" fill="none"/><path d="M981.0 306.0L981.0 310.0L988.0 310.0" stroke="#46dc46" stroke-width="1" fill="none"/><circle cx="986.0" cy="307.0" r="2" stroke="#46dc46" stroke-width="1" fill="none" shape-rendering="geometricPrecision"/><path d="M991.0 306.0L991.0 310.0L998.0 310.0" stroke="#46dc46" stroke-width="1" fill="none"/><circle cx="996.0" cy="307.0" r="2" stroke="#46dc46" stroke-width="1" fill="none" shape-rendering="geometricPrecision"/><path d="M1053.0 305.0L1053.0 309.0L1060.0 309.0" stroke="#46dc46" stroke-width="1" fill="none"/><circle cx="1058.0" cy="306.0" r="2" stroke="#46dc46" stroke-width="1" fill="none" shape-rendering="geometricPrecision"/><path d="M1063.0 305.0L1063.0 309.0L1070.0 309.0" stroke="#46dc46" stroke-width="1" fill="none"/><circle cx="1068.0" cy="306.0" r="2" stroke="#46dc46" stroke-width="1" fill="none" shape-rendering="geometricPrecision"/><path d="M930.0 346.0L930.0 350.0L937.0 350.0" stroke="#46dc46" stroke-width="1" fill="none"/><circle cx="935.0" cy="347.0" r="2" stroke="#46dc46" stroke-width="1" fill="none" shape-rendering="geometricPrecision"/><path d="M930.0 365.0L930.0 369.0L937.0 369.0" stroke="#46dc46" stroke-width="1" fill="none"/><circle cx="935.0" cy="366.0" r="2" stroke="#46dc46" stroke-width="1" fill="none" shape-rendering="geometricPrecision"/><path d="M925.0 389.6L1063.0 389.6" stroke="#4ae0f0" stroke-width="1" fill="none"/><path d="M925.0 392.2L1055.0 392.2" stroke="#4ae0f0" stroke-width="1" fill="none"/><path d="M925.0 394.8L1000.0 394.8" stroke="#4ae0f0" stroke-width="1" fill="none"/><path d="M925.0 398.2L970.0 398.2" stroke="#4ae0f0" stroke-width="1" fill="none"/><path d="M925.0 403.4L1010.0 403.4" stroke="#4ae0f0" stroke-width="1" fill="none"/><path d="M925.0 408.6L1130.0 408.6" stroke="#4ae0f0" stroke-width="1" fill="none"/><path d="M925.0 420.7L975.0 420.7" stroke="#4ae0f0" stroke-width="1" fill="none"/><path d="M925.0 424.2L1023.0 424.2" stroke="#4ae0f0" stroke-width="1" fill="none"/><path d="M925.0 427.7L1130.0 427.7" stroke="#4ae0f0" stroke-width="1" fill="none"/><path d="M1063.0 389.6L1063.0 403.0" stroke="#4ae0f0" stroke-width="1" fill="none"/><path d="M1055.0 392.2L1055.0 403.0" stroke="#4ae0f0" stroke-width="1" fill="none"/><path d="M975.0 420.7L975.0 414.0" stroke="#4ae0f0" stroke-width="1" fill="none"/><path d="M1023.0 424.2L1023.0 410.0" stroke="#4ae0f0" stroke-width="1" fill="none"/><path d="M930.0 390.0L940.0 395.0L943.0 405.0L940.0 415.0L930.0 420.0" stroke="#46dc46" stroke-width="1" fill="none"/><circle cx="957.0" cy="403.0" r="2.2" stroke="#46dc46" stroke-width="1" fill="none" shape-rendering="geometricPrecision"/><circle cx="980.0" cy="403.0" r="2.2" stroke="#46dc46" stroke-width="1" fill="none" shape-rendering="geometricPrecision"/><circle cx="990.0" cy="403.0" r="2.2" stroke="#46dc46" stroke-width="1" fill="none" shape-rendering="geometricPrecision"/><circle cx="1050.0" cy="403.0" r="2.2" stroke="#46dc46" stroke-width="1" fill="none" shape-rendering="geometricPrecision"/><circle cx="1063.0" cy="403.0" r="2.2" stroke="#46dc46" stroke-width="1" fill="none" shape-rendering="geometricPrecision"/><circle cx="965.0" cy="413.0" r="2.2" stroke="#46dc46" stroke-width="1" fill="none" shape-rendering="geometricPrecision"/><circle cx="977.0" cy="413.0" r="2.2" stroke="#46dc46" stroke-width="1" fill="none" shape-rendering="geometricPrecision"/><circle cx="1017.0" cy="410.0" r="2.2" stroke="#46dc46" stroke-width="1" fill="none" shape-rendering="geometricPrecision"/><circle cx="1030.0" cy="410.0" r="2.2" stroke="#46dc46" stroke-width="1" fill="none" shape-rendering="geometricPrecision"/><circle cx="932.0" cy="455.0" r="2.2" stroke="#46dc46" stroke-width="1" fill="none" shape-rendering="geometricPrecision"/><circle cx="932.0" cy="462.0" r="2.2" stroke="#46dc46" stroke-width="1" fill="none" shape-rendering="geometricPrecision"/><circle cx="932.0" cy="470.0" r="2.2" stroke="#46dc46" stroke-width="1" fill="none" shape-rendering="geometricPrecision"/><circle cx="950.0" cy="490.0" r="2.2" stroke="#46dc46" stroke-width="1" fill="none" shape-rendering="geometricPrecision"/><circle cx="958.0" cy="490.0" r="2.2" stroke="#46dc46" stroke-width="1" fill="none" shape-rendering="geometricPrecision"/><circle cx="992.0" cy="475.0" r="2.2" stroke="#46dc46" stroke-width="1" fill="none" shape-rendering="geometricPrecision"/><circle cx="1030.0" cy="555.0" r="2.2" stroke="#46dc46" stroke-width="1" fill="none" shape-rendering="geometricPrecision"/><circle cx="1033.0" cy="540.0" r="2.2" stroke="#46dc46" stroke-width="1" fill="none" shape-rendering="geometricPrecision"/><circle cx="1012.0" cy="547.0" r="2.2" stroke="#46dc46" stroke-width="1" fill="none" shape-rendering="geometricPrecision"/><path d="M925.0 477.0L965.0 477.0" stroke="#4ae0f0" stroke-width="1" fill="none"/><path d="M925.0 482.0L1008.0 482.0" stroke="#4ae0f0" stroke-width="1" fill="none"/><path d="M925.0 486.0L1030.0 486.0" stroke="#4ae0f0" stroke-width="1" fill="none"/><path d="M935.0 430.0L935.0 480.0" stroke="#4ae0f0" stroke-width="1" fill="none"/><path d="M925.0 481.0L1012.0 488.0L1012.0 499.0" stroke="#4ae0f0" stroke-width="1" fill="none"/><path d="M925.0 483.0L1000.0 495.0L1010.0 499.0" stroke="#4ae0f0" stroke-width="1" fill="none"/><path d="M925.0 485.0L950.0 505.0" stroke="#4ae0f0" stroke-width="1" fill="none"/><path d="M925.0 487.0L935.0 505.0" stroke="#4ae0f0" stroke-width="1" fill="none"/><path d="M1013.0 519.0L1057.0 579.0" stroke="#4ae0f0" stroke-width="1" fill="none"/><path d="M1016.0 519.0L1060.0 579.0" stroke="#4ae0f0" stroke-width="1" fill="none"/><path d="M1012.0 499.0L1030.0 505.0L1033.0 540.0" stroke="#4ae0f0" stroke-width="1" fill="none"/><path d="M1010.0 499.0L1041.0 499.0L1041.0 535.0" stroke="#4ae0f0" stroke-width="1" fill="none"/><path d="M925.0 505.5L1000.0 505.5" stroke="#4ae0f0" stroke-width="1" fill="none"/><path d="M932.0 495.0L932.0 540.0L1030.0 542.0" stroke="#4ae0f0" stroke-width="1" fill="none"/><path d="M931.0 500.0L931.0 552.0L1035.0 553.0" stroke="#4ae0f0" stroke-width="1" fill="none"/><path d="M982.0 507.0L985.0 520.0L995.0 525.0L995.0 505.0" stroke="#46dc46" stroke-width="1" fill="none"/><text x="1022.0" y="355.5" font-size="6.5" fill="#ffffff" text-anchor="middle" font-family="Liberation Sans" font-weight="bold">写字间</text><text x="1022.0" y="451.5" font-size="6.5" fill="#ffffff" text-anchor="middle" font-family="Liberation Sans" font-weight="bold">写字间</text><text x="962.0" y="560.5" font-size="6.5" fill="#ffffff" text-anchor="middle" font-family="Liberation Sans" font-weight="bold">写字间</text><rect x="974.5" y="319.0" width="3.0" height="4.0" fill="#ffffff" opacity="0.8"/><rect x="966.5" y="329.0" width="3.0" height="4.0" fill="#ffffff" opacity="0.8"/><rect x="1033.5" y="321.0" width="3.0" height="4.0" fill="#ffffff" opacity="0.8"/><rect x="1013.5" y="344.0" width="3.0" height="4.0" fill="#ffffff" opacity="0.8"/><rect x="944.5" y="376.0" width="3.0" height="4.0" fill="#ffffff" opacity="0.8"/><rect x="1042.5" y="392.0" width="3.0" height="4.0" fill="#ffffff" opacity="0.8"/><rect x="1048.5" y="404.0" width="3.0" height="4.0" fill="#ffffff" opacity="0.8"/><rect x="978.5" y="408.0" width="3.0" height="4.0" fill="#ffffff" opacity="0.8"/><rect x="945.5" y="436.0" width="3.0" height="4.0" fill="#ffffff" opacity="0.8"/><rect x="956.5" y="473.0" width="3.0" height="4.0" fill="#ffffff" opacity="0.8"/><rect x="1005.5" y="445.0" width="3.0" height="4.0" fill="#ffffff" opacity="0.8"/><rect x="998.5" y="467.0" width="3.0" height="4.0" fill="#ffffff" opacity="0.8"/><rect x="1061.5" y="500.0" width="3.0" height="4.0" fill="#ffffff" opacity="0.8"/><path d="M1113 300L1120 300L1138 522L1129 522Z" fill="url(#hp)" stroke="#2af02a" stroke-width="1"/><path d="M1112.0 313.8L1128.5 500.0L1128.5 522.5L1107.7 539.0L1110.3 548.5L1080.0 559.7L1082.6 568.4L1052.3 576.2L1055.0 584.8L1024.6 593.5L1026.4 602.1L994.3 607.3L995.2 615.1L964.0 618.6L965.0 627.2L932.9 628.1L933.8 636.8L906.9 636.8L902.6 643.7" stroke="#ffffff" stroke-width="2" fill="none"/><defs><pattern id="hp" patternUnits="userSpaceOnUse" width="3.6" height="3.6" patternTransform="rotate(35)"><rect width="3.6" height="3.6" fill="#2af02a"/><rect x="0" y="0" width="1" height="3.6" fill="#0a400a"/></pattern></defs><path d="M910.4 639.0L948.8 636.2L948.8 640.8L912.4 643.8Z" fill="url(#hp)" stroke="#2af02a" stroke-width="0.8"/><path d="M910.4 639.0L912.9 648.0L922.4 648.5" stroke="#2af02a" stroke-width="2.6" fill="none"/><path d="M936.4 630.3L980.0 626.6L980.0 631.2L938.4 635.1Z" fill="url(#hp)" stroke="#2af02a" stroke-width="0.8"/><path d="M936.4 630.3L938.9 639.3L948.4 639.8" stroke="#2af02a" stroke-width="2.6" fill="none"/><path d="M967.5 620.8L1010.2 614.5L1010.2 619.1L969.5 625.6Z" fill="url(#hp)" stroke="#2af02a" stroke-width="0.8"/><path d="M967.5 620.8L970.0 629.8L979.5 630.3" stroke="#2af02a" stroke-width="2.6" fill="none"/><path d="M997.8 609.5L1041.4 601.5L1041.4 606.1L999.8 614.3Z" fill="url(#hp)" stroke="#2af02a" stroke-width="0.8"/><path d="M997.8 609.5L1000.3 618.5L1009.8 619.0" stroke="#2af02a" stroke-width="2.6" fill="none"/><path d="M1028.1 595.7L1070.0 584.2L1070.0 588.8L1030.1 600.5Z" fill="url(#hp)" stroke="#2af02a" stroke-width="0.8"/><path d="M1028.1 595.7L1030.6 604.7L1040.1 605.2" stroke="#2af02a" stroke-width="2.6" fill="none"/><path d="M1055.8 578.4L1097.6 567.8L1097.6 572.4L1057.8 583.2Z" fill="url(#hp)" stroke="#2af02a" stroke-width="0.8"/><path d="M1055.8 578.4L1058.3 587.4L1067.8 587.9" stroke="#2af02a" stroke-width="2.6" fill="none"/><path d="M1083.5 561.9L1125.3 547.9L1125.3 552.5L1085.5 566.7Z" fill="url(#hp)" stroke="#2af02a" stroke-width="0.8"/><path d="M1083.5 561.9L1086.0 570.9L1095.5 571.4" stroke="#2af02a" stroke-width="2.6" fill="none"/><path d="M1111.2 541.2L1146.0 514.0L1146.0 518.6L1113.2 546.0Z" fill="url(#hp)" stroke="#2af02a" stroke-width="0.8"/><path d="M1111.2 541.2L1113.7 550.2L1123.2 550.7" stroke="#2af02a" stroke-width="2.6" fill="none"/><path d="M615.0 619.0L653.4 619.0L653.4 626.0L690.0 626.0" stroke="#ffffff" stroke-width="2" fill="none"/><path d="M697.0 621.0L697.0 634.7L902.9 644.0" stroke="#ffffff" stroke-width="2" fill="none"/><path d="M902.9 644.0L902.9 635.8L925.0 635.8" stroke="#ffffff" stroke-width="2" fill="none"/><path d="M600.0 623.7L649.0 623.7L649.0 631.4L691.9 631.4L691.9 640.2L915.0 650.0" stroke="#22ee22" stroke-width="3.5" fill="none"/><path d="M691.9 644.0L912.0 653.0" stroke="#22ee22" stroke-width="1.2" fill="none"/><path d="M600.0 506.7L660.0 506.7" stroke="#4ae0f0" stroke-width="1" fill="none"/><path d="M672.0 506.7L760.0 506.7" stroke="#4ae0f0" stroke-width="1" fill="none"/><path d="M775.0 506.7L925.0 506.7" stroke="#4ae0f0" stroke-width="1" fill="none"/><path d="M602.2 495.0L602.2 607.0" stroke="#4ae0f0" stroke-width="1" fill="none"/><path d="M604.5 495.0L604.5 607.0" stroke="#4ae0f0" stroke-width="1" fill="none"/><path d="M696.9 519.0L696.9 607.0" stroke="#40f0ff" stroke-width="1.8" fill="none"/><path d="M799.0 519.0L799.0 607.0" stroke="#4ae0f0" stroke-width="1" fill="none"/><path d="M802.0 519.0L802.0 607.0" stroke="#4ae0f0" stroke-width="1" fill="none"/><path d="M902.2 519.0L902.2 607.0" stroke="#4ae0f0" stroke-width="1" fill="none"/><path d="M660.0 506.7L663.0 514.0L668.0 510.0L672.0 514.0L675.0 506.7" stroke="#46dc46" stroke-width="1" fill="none"/><path d="M760.0 506.7L763.0 514.0L768.0 510.0L772.0 514.0L775.0 506.7" stroke="#46dc46" stroke-width="1" fill="none"/><path d="M705.0 519.0L715.0 510.0L720.0 506.0" stroke="#46dc46" stroke-width="1" fill="none"/><path d="M808.0 506.0L815.0 515.0L822.0 506.0" stroke="#46dc46" stroke-width="1" fill="none"/><path d="M885.0 506.0L893.0 515.0L895.0 519.0" stroke="#46dc46" stroke-width="1" fill="none"/><path d="M617.0 495.0L617.0 565.0L608.0 565.0" stroke="#4ae0f0" stroke-width="1" fill="none"/><path d="M621.0 495.0L621.0 575.0L608.0 575.0" stroke="#4ae0f0" stroke-width="1" fill="none"/><path d="M670.0 495.0L670.0 575.0L692.0 575.0" stroke="#4ae0f0" stroke-width="1" fill="none"/><path d="M674.0 495.0L674.0 545.0L692.0 545.0" stroke="#4ae0f0" stroke-width="1" fill="none"/><path d="M685.0 495.0L685.0 538.0L694.0 538.0" stroke="#4ae0f0" stroke-width="1" fill="none"/><path d="M690.0 495.0L690.0 528.0L694.0 528.0" stroke="#4ae0f0" stroke-width="1" fill="none"/><path d="M712.0 495.0L712.0 575.0L703.0 575.0" stroke="#4ae0f0" stroke-width="1" fill="none"/><path d="M715.0 495.0L715.0 555.0L703.0 555.0" stroke="#4ae0f0" stroke-width="1" fill="none"/><path d="M788.0 495.0L788.0 575.0L797.0 575.0" stroke="#4ae0f0" stroke-width="1" fill="none"/><path d="M793.0 495.0L793.0 545.0L797.0 545.0" stroke="#4ae0f0" stroke-width="1" fill="none"/><path d="M815.0 495.0L815.0 575.0L806.0 575.0" stroke="#4ae0f0" stroke-width="1" fill="none"/><path d="M818.0 495.0L818.0 545.0L806.0 545.0" stroke="#4ae0f0" stroke-width="1" fill="none"/><path d="M887.0 495.0L887.0 575.0L899.0 575.0" stroke="#4ae0f0" stroke-width="1" fill="none"/><path d="M890.0 495.0L890.0 562.0L899.0 562.0" stroke="#4ae0f0" stroke-width="1" fill="none"/><path d="M910.0 495.0L910.0 600.0L905.0 600.0" stroke="#4ae0f0" stroke-width="1" fill="none"/><path d="M914.0 495.0L914.0 585.0L905.0 585.0" stroke="#4ae0f0" stroke-width="1" fill="none"/><path d="M918.0 495.0L918.0 560.0L905.0 560.0" stroke="#4ae0f0" stroke-width="1" fill="none"/><path d="M605.0 559.0L605.0 564.0L611.0 564.0" stroke="#46dc46" stroke-width="1" fill="none"/><circle cx="608.0" cy="561.0" r="1.8" stroke="#46dc46" stroke-width="1" fill="none" shape-rendering="geometricPrecision"/><path d="M605.0 567.0L605.0 572.0L611.0 572.0" stroke="#46dc46" stroke-width="1" fill="none"/><circle cx="608.0" cy="569.0" r="1.8" stroke="#46dc46" stroke-width="1" fill="none" shape-rendering="geometricPrecision"/><path d="M688.0 539.0L688.0 544.0L694.0 544.0" stroke="#46dc46" stroke-width="1" fill="none"/><circle cx="691.0" cy="541.0" r="1.8" stroke="#46dc46" stroke-width="1" fill="none" shape-rendering="geometricPrecision"/><path d="M688.0 550.0L688.0 555.0L694.0 555.0" stroke="#46dc46" stroke-width="1" fill="none"/><circle cx="691.0" cy="552.0" r="1.8" stroke="#46dc46" stroke-width="1" fill="none" shape-rendering="geometricPrecision"/><path d="M687.0 575.0L687.0 580.0L693.0 580.0" stroke="#46dc46" stroke-width="1" fill="none"/><circle cx="690.0" cy="577.0" r="1.8" stroke="#46dc46" stroke-width="1" fill="none" shape-rendering="geometricPrecision"/><path d="M687.0 582.0L687.0 587.0L693.0 587.0" stroke="#46dc46" stroke-width="1" fill="none"/><circle cx="690.0" cy="584.0" r="1.8" stroke="#46dc46" stroke-width="1" fill="none" shape-rendering="geometricPrecision"/><path d="M700.0 552.0L700.0 557.0L706.0 557.0" stroke="#46dc46" stroke-width="1" fill="none"/><circle cx="703.0" cy="554.0" r="1.8" stroke="#46dc46" stroke-width="1" fill="none" shape-rendering="geometricPrecision"/><path d="M700.0 572.0L700.0 577.0L706.0 577.0" stroke="#46dc46" stroke-width="1" fill="none"/><circle cx="703.0" cy="574.0" r="1.8" stroke="#46dc46" stroke-width="1" fill="none" shape-rendering="geometricPrecision"/><path d="M794.0 551.0L794.0 556.0L800.0 556.0" stroke="#46dc46" stroke-width="1" fill="none"/><circle cx="797.0" cy="553.0" r="1.8" stroke="#46dc46" stroke-width="1" fill="none" shape-rendering="geometricPrecision"/><path d="M803.0 551.0L803.0 556.0L809.0 556.0" stroke="#46dc46" stroke-width="1" fill="none"/><circle cx="806.0" cy="553.0" r="1.8" stroke="#46dc46" stroke-width="1" fill="none" shape-rendering="geometricPrecision"/><path d="M794.0 572.0L794.0 577.0L800.0 577.0" stroke="#46dc46" stroke-width="1" fill="none"/><circle cx="797.0" cy="574.0" r="1.8" stroke="#46dc46" stroke-width="1" fill="none" shape-rendering="geometricPrecision"/><path d="M803.0 572.0L803.0 577.0L809.0 577.0" stroke="#46dc46" stroke-width="1" fill="none"/><circle cx="806.0" cy="574.0" r="1.8" stroke="#46dc46" stroke-width="1" fill="none" shape-rendering="geometricPrecision"/><path d="M895.0 559.0L895.0 564.0L901.0 564.0" stroke="#46dc46" stroke-width="1" fill="none"/><circle cx="898.0" cy="561.0" r="1.8" stroke="#46dc46" stroke-width="1" fill="none" shape-rendering="geometricPrecision"/><path d="M896.0 566.0L896.0 571.0L902.0 571.0" stroke="#46dc46" stroke-width="1" fill="none"/><circle cx="899.0" cy="568.0" r="1.8" stroke="#46dc46" stroke-width="1" fill="none" shape-rendering="geometricPrecision"/><path d="M903.0 547.0L903.0 552.0L909.0 552.0" stroke="#46dc46" stroke-width="1" fill="none"/><circle cx="906.0" cy="549.0" r="1.8" stroke="#46dc46" stroke-width="1" fill="none" shape-rendering="geometricPrecision"/><path d="M903.0 566.0L903.0 571.0L909.0 571.0" stroke="#46dc46" stroke-width="1" fill="none"/><circle cx="906.0" cy="568.0" r="1.8" stroke="#46dc46" stroke-width="1" fill="none" shape-rendering="geometricPrecision"/><path d="M903.0 580.0L903.0 585.0L909.0 585.0" stroke="#46dc46" stroke-width="1" fill="none"/><circle cx="906.0" cy="582.0" r="1.8" stroke="#46dc46" stroke-width="1" fill="none" shape-rendering="geometricPrecision"/><path d="M903.0 597.0L903.0 602.0L909.0 602.0" stroke="#46dc46" stroke-width="1" fill="none"/><circle cx="906.0" cy="599.0" r="1.8" stroke="#46dc46" stroke-width="1" fill="none" shape-rendering="geometricPrecision"/><path d="M635.0 508.0L635.0 513.0L641.0 513.0" stroke="#46dc46" stroke-width="1" fill="none"/><circle cx="638.0" cy="510.0" r="1.8" stroke="#46dc46" stroke-width="1" fill="none" shape-rendering="geometricPrecision"/><path d="M729.0 508.0L729.0 513.0L735.0 513.0" stroke="#46dc46" stroke-width="1" fill="none"/><circle cx="732.0" cy="510.0" r="1.8" stroke="#46dc46" stroke-width="1" fill="none" shape-rendering="geometricPrecision"/><path d="M755.0 508.0L755.0 513.0L761.0 513.0" stroke="#46dc46" stroke-width="1" fill="none"/><circle cx="758.0" cy="510.0" r="1.8" stroke="#46dc46" stroke-width="1" fill="none" shape-rendering="geometricPrecision"/><path d="M763.0 508.0L763.0 513.0L769.0 513.0" stroke="#46dc46" stroke-width="1" fill="none"/><circle cx="766.0" cy="510.0" r="1.8" stroke="#46dc46" stroke-width="1" fill="none" shape-rendering="geometricPrecision"/><path d="M822.0 508.0L822.0 513.0L828.0 513.0" stroke="#46dc46" stroke-width="1" fill="none"/><circle cx="825.0" cy="510.0" r="1.8" stroke="#46dc46" stroke-width="1" fill="none" shape-rendering="geometricPrecision"/><path d="M836.0 508.0L836.0 513.0L842.0 513.0" stroke="#46dc46" stroke-width="1" fill="none"/><circle cx="839.0" cy="510.0" r="1.8" stroke="#46dc46" stroke-width="1" fill="none" shape-rendering="geometricPrecision"/><path d="M872.0 508.0L872.0 513.0L878.0 513.0" stroke="#46dc46" stroke-width="1" fill="none"/><circle cx="875.0" cy="510.0" r="1.8" stroke="#46dc46" stroke-width="1" fill="none" shape-rendering="geometricPrecision"/><path d="M652.0 450.0L652.0 455.0L658.0 455.0" stroke="#46dc46" stroke-width="1" fill="none"/><circle cx="655.0" cy="452.0" r="1.8" stroke="#46dc46" stroke-width="1" fill="none" shape-rendering="geometricPrecision"/><path d="M615.0 451.0L615.0 456.0L621.0 456.0" stroke="#46dc46" stroke-width="1" fill="none"/><circle cx="618.0" cy="453.0" r="1.8" stroke="#46dc46" stroke-width="1" fill="none" shape-rendering="geometricPrecision"/><text x="641.0" y="537.0" font-size="6.5" fill="#ffffff" text-anchor="middle" font-family="Liberation Sans" font-weight="bold">写字间</text><text x="745.6" y="561.4" font-size="6.5" fill="#ffffff" text-anchor="middle" font-family="Liberation Sans" font-weight="bold">写字间</text><text x="854.7" y="561.4" font-size="6.5" fill="#ffffff" text-anchor="middle" font-family="Liberation Sans" font-weight="bold">写字间</text><rect x="614.5" y="534.0" width="3.0" height="4.0" fill="#ffffff" opacity="0.8"/><rect x="623.5" y="533.0" width="3.0" height="4.0" fill="#ffffff" opacity="0.8"/><rect x="665.5" y="536.0" width="3.0" height="4.0" fill="#ffffff" opacity="0.8"/><rect x="674.5" y="525.0" width="3.0" height="4.0" fill="#ffffff" opacity="0.8"/><rect x="690.5" y="527.0" width="3.0" height="4.0" fill="#ffffff" opacity="0.8"/><rect x="711.5" y="532.0" width="3.0" height="4.0" fill="#ffffff" opacity="0.8"/><rect x="716.5" y="544.0" width="3.0" height="4.0" fill="#ffffff" opacity="0.8"/><rect x="783.5" y="545.0" width="3.0" height="4.0" fill="#ffffff" opacity="0.8"/><rect x="807.5" y="538.0" width="3.0" height="4.0" fill="#ffffff" opacity="0.8"/><rect x="815.5" y="544.0" width="3.0" height="4.0" fill="#ffffff" opacity="0.8"/><rect x="878.5" y="535.0" width="3.0" height="4.0" fill="#ffffff" opacity="0.8"/><rect x="888.5" y="533.0" width="3.0" height="4.0" fill="#ffffff" opacity="0.8"/><rect x="901.5" y="535.0" width="3.0" height="4.0" fill="#ffffff" opacity="0.8"/><rect x="695.5" y="499.0" width="3.0" height="4.0" fill="#ffffff" opacity="0.8"/><rect x="738.5" y="499.0" width="3.0" height="4.0" fill="#ffffff" opacity="0.8"/><rect x="755.5" y="499.0" width="3.0" height="4.0" fill="#ffffff" opacity="0.8"/><rect x="768.5" y="499.0" width="3.0" height="4.0" fill="#ffffff" opacity="0.8"/><rect x="831.5" y="499.0" width="3.0" height="4.0" fill="#ffffff" opacity="0.8"/><rect x="842.5" y="499.0" width="3.0" height="4.0" fill="#ffffff" opacity="0.8"/><rect x="860.5" y="499.0" width="3.0" height="4.0" fill="#ffffff" opacity="0.8"/><rect x="902.5" y="499.0" width="3.0" height="4.0" fill="#ffffff" opacity="0.8"/><rect x="600.3" y="299.0" width="14.7" height="14.6" fill="#c3c3c3"/><rect x="897.4" y="287.0" width="10.6" height="9.7" fill="#c3c3c3"/><rect x="998.3" y="299.5" width="14.7" height="14.4" fill="#c3c3c3"/><rect x="1000.0" y="287.0" width="10.7" height="10.0" fill="#c3c3c3"/><rect x="1100.3" y="299.7" width="14.7" height="14.1" fill="#c3c3c3"/><rect x="1100.0" y="288.0" width="13.4" height="11.0" fill="#c3c3c3"/><rect x="600.4" y="402.3" width="14.6" height="13.9" fill="#c3c3c3"/><rect x="998.3" y="402.2" width="14.7" height="14.5" fill="#c3c3c3"/><rect x="1100.3" y="402.5" width="14.7" height="14.1" fill="#c3c3c3"/><rect x="600.6" y="505.5" width="14.4" height="13.9" fill="#c3c3c3"/><rect x="690.4" y="505.5" width="14.6" height="13.9" fill="#c3c3c3"/><rect x="792.0" y="505.5" width="14.6" height="13.9" fill="#c3c3c3"/><rect x="895.3" y="505.5" width="14.6" height="13.9" fill="#c3c3c3"/><rect x="998.3" y="505.0" width="14.7" height="14.6" fill="#c3c3c3"/><rect x="1100.3" y="505.4" width="14.7" height="14.0" fill="#c3c3c3"/><rect x="998.3" y="573.3" width="14.7" height="14.2" fill="#c3c3c3"/><rect x="600.7" y="607.3" width="14.3" height="14.2" fill="#c3c3c3"/><rect x="690.0" y="607.3" width="14.6" height="14.2" fill="#c3c3c3"/><rect x="792.3" y="607.3" width="14.5" height="14.2" fill="#c3c3c3"/><rect x="895.2" y="607.3" width="14.3" height="14.2" fill="#c3c3c3"/><rect x="584.2" y="609.5" width="11.0" height="10.9" fill="#c3c3c3"/><rect x="584.0" y="711.6" width="11.0" height="12.1" fill="#c3c3c3"/></svg>
<div class="a" style="left:55px;top:869px;width:1581px;height:22px;background:#d3d7df;"></div>
<div class="a" style="left:55px;top:869px;width:1581px;height:1px;background:#e6e6e6;"></div>
<div class="a" style="left:54px;top:128px;width:1px;height:763px;background:#2a5aa0;"></div>
<svg class="a" style="left:0;top:860px" width="1638" height="64" viewBox="0 860 1638 64"><path d="M55 870H1636V890.5H55Z" fill="#d2d6de"/><path d="M220.5 870H302.6L292.3 890.5H227Z" fill="#c2c4ca"/><path d="M302.6 870H387.2L377 890.5H311.5Z" fill="#c2c4ca"/><path d="M219.7 870L227 890.5M302.6 870L292.3 890.5M302.6 870L311.5 890.5M387.2 870L377 890.5" stroke="#a0a4aa" stroke-width="1"/><path d="M135.5 870H219.7L208.7 890.5H144Z" fill="#ffffff"/><path d="M135.5 870L144 890.5M219.7 870L208.7 890.5" stroke="#9aa0a8" stroke-width="1"/><rect x="56.5" y="870.5" width="18.6" height="19.5" fill="#f2f2f2" stroke="#b8bcc4" stroke-width="1"/><rect x="76.1" y="870.5" width="18.6" height="19.5" fill="#f2f2f2" stroke="#b8bcc4" stroke-width="1"/><rect x="95.7" y="870.5" width="18.6" height="19.5" fill="#f2f2f2" stroke="#b8bcc4" stroke-width="1"/><rect x="115.3" y="870.5" width="18.6" height="19.5" fill="#f2f2f2" stroke="#b8bcc4" stroke-width="1"/><path d="M61.5 874.5H63.5V886.5H61.5Z M64 880.5L71 874.5V886.5Z" fill="#8a8a8a"/><path d="M81 880.5L88 874.5V886.5Z" fill="#8a8a8a"/><path d="M107 880.5L100 874.5V886.5Z" fill="#8a8a8a"/><path d="M128.5 874.5H130.5V886.5H128.5Z M128 880.5L121 874.5V886.5Z" fill="#8a8a8a"/><path d="M55 890.5H1636" stroke="#4a90dc" stroke-width="1"/></svg>
<div class="a" style="left:162px;top:874px;font-size:14px;color:#111;line-height:1;white-space:nowrap;">模型</div>
<div class="a" style="left:233px;top:874px;font-size:14.5px;color:#111;line-height:1;white-space:nowrap;">Layout1</div>
<div class="a" style="left:317px;top:874px;font-size:14.5px;color:#111;line-height:1;white-space:nowrap;">Layout2</div>
<div class="a" style="left:2px;top:891px;width:1634px;height:31px;background:#f0f0f0;"></div>
<div class="a" style="left:0px;top:921px;width:1638px;height:3px;background:#1c4f9c;"></div>
<div class="a" style="left:12px;top:894.5px;width:23px;height:22.5px;background:#2f7ae0;border-radius:1px;"></div>
<svg class="a" style="left:14px;top:899px;" width="19" height="12" viewBox="0 0 19 12"><path d="M8.5 0.5H4Q0.8 0.5 0.8 3.5V7.5Q0.8 10.5 4 10.5H11L10 8.5H4.5Q2.8 8.5 2.8 7V4Q2.8 2.5 4.5 2.5H7.5Z M6.5 6.5H8L9.5 4L12 10.5H18V3Q18 0.5 15.5 0.5H10.5L11.3 2.5H14.5Q16 2.5 16 4V8.5H12.5L10 0.5H9Z" fill="#fff"/></svg>
<div class="a" style="left:44px;top:898.5px;font-size:14px;color:#666;line-height:1;white-space:nowrap;">企业版-快速CAD</div>
<div class="a" style="left:177.5px;top:894.5px;width:107px;height:24px;border:1px solid #cfcfcf;border-radius:2px;background:linear-gradient(#e4e4e4,#d8d8d8);box-sizing:border-box"></div>
<div class="a" style="left:196px;top:900px;font-size:14px;color:#222;line-height:1;white-space:nowrap;">功能命令表</div>
<div class="a" style="left:299.5px;top:896.5px;width:320px;height:22px;border:1px solid #cacaca;background:#f6f6f6;box-sizing:border-box;border-radius:2px"></div>
<div class="a" style="left:301px;top:896.5px;font-size:12.3px;color:#8a8a8a;line-height:1;white-space:nowrap;">输入功能或命令关键词,快速查找功能</div>
<div class="a" style="left:619px;top:896.5px;width:92.5px;height:22px;border:1px solid #cfcfcf;background:linear-gradient(#e2e2e2,#d6d6d6);box-sizing:border-box;border-radius:2px"></div>
<div class="a" style="left:651px;top:901px;font-size:13px;color:#222;line-height:1;white-space:nowrap;">确定</div>
<div class="a" style="left:1129px;top:896.5px;width:182.5px;height:22px;border:1px solid #c8c8c8;background:#f6f6f6;box-sizing:border-box;border-radius:3px"></div>
<div class="a" style="left:1277px;top:897.5px;width:33.5px;height:20px;background:#dadada;border-radius:0 3px 3px 0"></div>
<div class="a" style="left:1129px;top:896.5px;font-size:12px;color:#8a8a8a;line-height:1;white-space:nowrap;">查找文字</div>
<svg class="a" style="left:0;top:880px" width="1638" height="44" viewBox="0 880 1638 44"><rect x="1491.5" y="891.5" width="145" height="29.5" fill="#fbfbfb"/><circle cx="1291.5" cy="904" r="5" stroke="#444" stroke-width="1.6" fill="none"/><path d="M1295 907.5L1300.5 913" stroke="#444" stroke-width="2"/><rect x="1319" y="893" width="27.5" height="27.5" fill="#d8d8d8"/><circle cx="1327" cy="899.5" r="2.3" stroke="#1e88e5" stroke-width="1.6" fill="none"/><circle cx="1341" cy="899.5" r="2.3" stroke="#1e88e5" stroke-width="1.6" fill="none"/><path d="M1330 899.5H1332M1334.5 899.5H1338.5" stroke="#1e88e5" stroke-width="1.4"/><path d="M1331 902.5L1337.5 909L1331 915.5L1324.5 909Z" fill="#1e88e5"/><path d="M1331 905.5V912.5M1327.5 909H1334.5" stroke="#fff" stroke-width="1"/><path d="M1356 901H1377M1356 905H1377M1356 909H1377M1356 913H1377M1360 897V917M1364 897V917M1368 897V917M1372 897V917" stroke="#222" stroke-width="2"/><rect x="1393.0" y="898.5" width="2.3" height="2.3" fill="#222"/><rect x="1397.2" y="898.5" width="2.3" height="2.3" fill="#222"/><rect x="1401.4" y="898.5" width="2.3" height="2.3" fill="#222"/><rect x="1405.6" y="898.5" width="2.3" height="2.3" fill="#222"/><rect x="1409.8" y="898.5" width="2.3" height="2.3" fill="#222"/><rect x="1393.0" y="902.5" width="2.3" height="2.3" fill="#222"/><rect x="1397.2" y="902.5" width="2.3" height="2.3" fill="#222"/><rect x="1401.4" y="902.5" width="2.3" height="2.3" fill="#222"/><rect x="1405.6" y="902.5" width="2.3" height="2.3" fill="#222"/><rect x="1409.8" y="902.5" width="2.3" height="2.3" fill="#222"/><rect x="1393.0" y="906.5" width="2.3" height="2.3" fill="#222"/><rect x="1397.2" y="906.5" width="2.3" height="2.3" fill="#222"/><rect x="1401.4" y="906.5" width="2.3" height="2.3" fill="#222"/><rect x="1405.6" y="906.5" width="2.3" height="2.3" fill="#222"/><rect x="1409.8" y="906.5" width="2.3" height="2.3" fill="#222"/><rect x="1393.0" y="910.5" width="2.3" height="2.3" fill="#222"/><rect x="1397.2" y="910.5" width="2.3" height="2.3" fill="#222"/><rect x="1401.4" y="910.5" width="2.3" height="2.3" fill="#222"/><rect x="1405.6" y="910.5" width="2.3" height="2.3" fill="#222"/><rect x="1409.8" y="910.5" width="2.3" height="2.3" fill="#222"/><rect x="1393.0" y="914.5" width="2.3" height="2.3" fill="#222"/><rect x="1397.2" y="914.5" width="2.3" height="2.3" fill="#222"/><rect x="1401.4" y="914.5" width="2.3" height="2.3" fill="#222"/><rect x="1405.6" y="914.5" width="2.3" height="2.3" fill="#222"/><rect x="1409.8" y="914.5" width="2.3" height="2.3" fill="#222"/><rect x="1422" y="893.2" width="27.3" height="26.3" fill="#d8d8d8"/><text x="1436" y="903" font-size="9" font-weight="bold" fill="#1e88e5" text-anchor="middle" font-family="Liberation Sans">N</text><path d="M1425 910H1431M1428 907V913M1439 907L1444 913M1444 907L1439 913" stroke="#1e88e5" stroke-width="2"/><path d="M1432.5 910H1437" stroke="#1e88e5" stroke-width="1" stroke-dasharray="1 1"/><path d="M1463 896.5V915.5H1479M1463 908.5H1468.5V915" stroke="#222" stroke-width="2" fill="none"/><path d="M1499 897.5H1514V911.5H1499Z" stroke="#1e88e5" stroke-width="2" fill="#cfe3f7"/><path d="M1496 915H1517" stroke="#1e88e5" stroke-width="2.4"/><path d="M1503 900L1510 907" stroke="#1e88e5" stroke-width="1.2"/><path d="M1531 906.5H1542" stroke="#222" stroke-width="2.5"/><text x="1491" y="907.5" font-size="20" fill="#8c8c8c" fill-opacity="0.6" font-family="Liberation Sans">激活 Windows</text><text x="1491" y="929" font-size="15" fill="#8c8c8c" fill-opacity="0.5" font-family="Liberation Sans">转到"设置"以激活Windows。</text><g transform="rotate(-16 1552 901)"><rect x="1539.5" y="888.5" width="25" height="25" rx="4" fill="#f05a28"/></g><path d="M1558.5 893C1553 891.5 1546.5 893 1546.5 897.5C1546.5 901.5 1556.5 900.5 1556 905C1555.5 909 1548.5 909.5 1545 907.5" stroke="#fff" stroke-width="3.2" fill="none"/><text x="1581" y="909.5" font-size="15" font-weight="bold" fill="#1e88e5" text-anchor="middle">中</text><circle cx="1603" cy="904" r="1.8" fill="#1e88e5"/><path d="M1609.5 904Q1610.5 909 1607.5 911.5" stroke="#1e88e5" stroke-width="2" fill="none"/><rect x="1625.5" y="896" width="6.5" height="11" rx="3.2" fill="#1e88e5"/><path d="M1622.5 903.5Q1622.5 909.5 1628.8 909.5Q1635 909.5 1635 903.5M1628.8 909.5V912.5" stroke="#1e88e5" stroke-width="1.6" fill="none"/></svg>
<div class="a" style="left:0px;top:921px;width:1638px;height:3px;background:#1c4f9c;"></div>
<div class="a" style="left:0px;top:0px;width:2px;height:924px;background:#1b7ad8;"></div>
<div class="a" style="left:2px;top:36px;width:1px;height:855px;background:#d8f0fc;"></div>
<div class="a" style="left:1636px;top:36px;width:1px;height:886px;background:#8fd0f4;"></div>
<div class="a" style="left:1637px;top:0px;width:1px;height:924px;background:#1b7ad8;"></div>
</body></html>
